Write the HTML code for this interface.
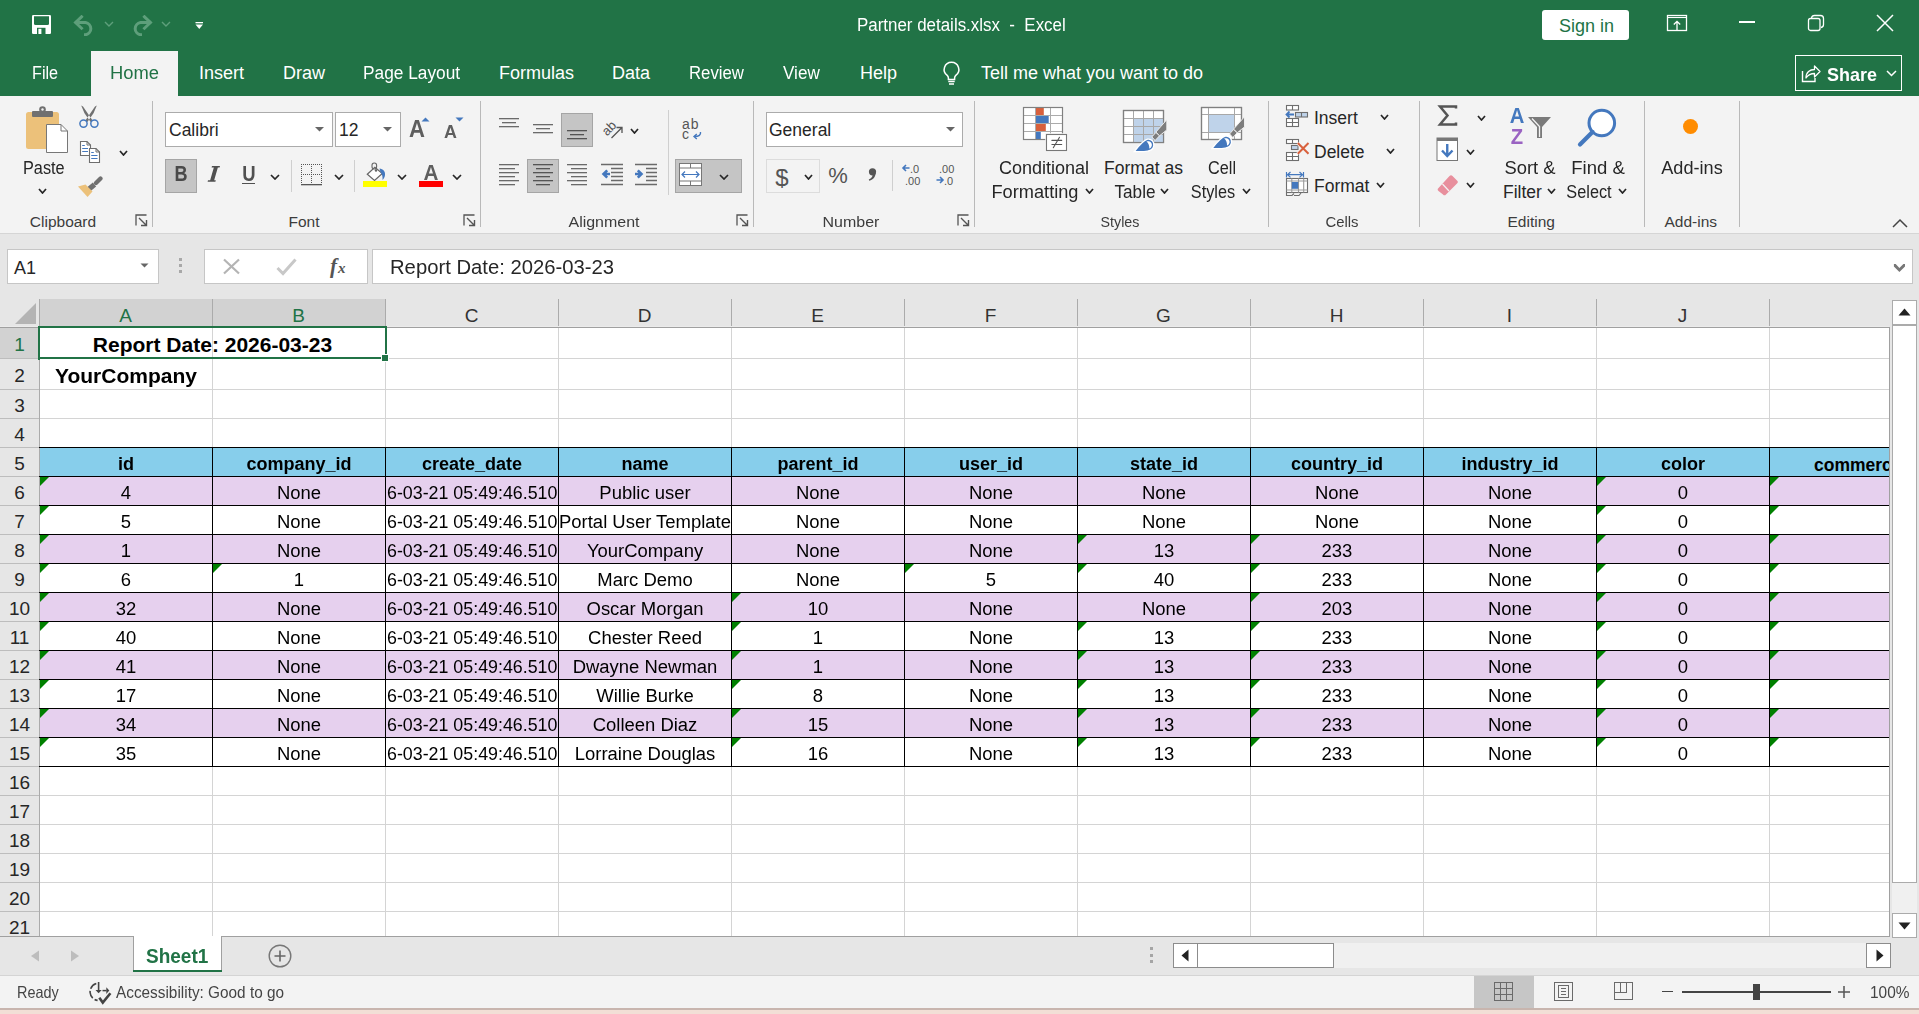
<!DOCTYPE html>
<html><head><meta charset="utf-8"><title>Partner details.xlsx - Excel</title>
<style>
html,body{margin:0;padding:0;width:1919px;height:1014px;overflow:hidden;background:#fff;}
body{position:relative;font-family:"Liberation Sans", sans-serif;}
svg text{font-family:"Liberation Sans",sans-serif;}
</style></head><body>
<div style="position:absolute;left:0px;top:0px;width:1919px;height:96px;background:#217346;"></div><svg style="position:absolute;left:32px;top:15px;" width="19" height="19" viewBox="0 0 19 19"><rect x="0" y="0" width="19" height="19" rx="1.2" fill="#fff"/><path d="M2 1.2 H17 V8.5 a1.5 1.5 0 0 1 -1.5 1.5 H3.5 a1.5 1.5 0 0 1 -1.5 -1.5 Z" fill="#217346"/><rect x="5" y="12.8" width="8.5" height="6.2" fill="#217346"/><rect x="6.4" y="13.8" width="3" height="5.2" fill="#fff"/></svg><svg style="position:absolute;left:73px;top:15px;" width="23" height="21" viewBox="0 0 23 21"><path d="M2.5 7.5 L8.5 1.8 M2.5 7.5 L8.5 13.2" stroke="#5e9f7b" stroke-width="3" fill="none" stroke-linecap="square"/><path d="M3.5 7.5 H12.5 A6.8 6.3 0 0 1 12.5 19.8 H11" stroke="#5e9f7b" stroke-width="3" fill="none"/></svg><svg style="position:absolute;left:104px;top:21px;" width="10" height="7" viewBox="0 0 10 7"><path d="M1 1 L5 5 L9 1" stroke="#5e9f7b" stroke-width="1.4" fill="none"/></svg><svg style="position:absolute;left:130px;top:15px;" width="23" height="21" viewBox="0 0 23 21"><path d="M20.5 7.5 L14.5 1.8 M20.5 7.5 L14.5 13.2" stroke="#5e9f7b" stroke-width="3" fill="none" stroke-linecap="square"/><path d="M19.5 7.5 H10.5 A6.8 6.3 0 0 0 10.5 19.8 H12" stroke="#5e9f7b" stroke-width="3" fill="none"/></svg><svg style="position:absolute;left:161px;top:21px;" width="10" height="7" viewBox="0 0 10 7"><path d="M1 1 L5 5 L9 1" stroke="#5e9f7b" stroke-width="1.4" fill="none"/></svg><svg style="position:absolute;left:195px;top:21px;" width="9" height="9" viewBox="0 0 9 9"><rect x="0.5" y="1" width="7.5" height="1.3" fill="#fff"/><path d="M0.5 3.5 H8 L4.25 8 Z" fill="#fff"/></svg><div style="position:absolute;top:16.46px;font-size:18px;line-height:18px;color:#fff;font-weight:normal;white-space:pre;left:857px;transform:scaleX(0.94);transform-origin:left top;">Partner details.xlsx  -  Excel</div><div style="position:absolute;left:1542px;top:10px;width:87px;height:30px;background:#fff;border-radius:3px;"></div><div style="position:absolute;top:16.96px;font-size:18px;line-height:18px;color:#217346;font-weight:normal;white-space:pre;left:1559px;">Sign in</div><svg style="position:absolute;left:1666px;top:14px;" width="22" height="18" viewBox="0 0 22 18"><rect x="1.5" y="1.5" width="19" height="15" stroke="#fff" stroke-width="1.3" fill="none"/><path d="M1.5 3.5 H20.5" stroke="#fff" stroke-width="1.1"/><path d="M11 16.5 V7.5 M7.8 10.5 L11 7.3 L14.2 10.5" stroke="#fff" stroke-width="1.3" fill="none"/></svg><div style="position:absolute;left:1739px;top:21px;width:16px;height:1.5px;background:#fff;"></div><svg style="position:absolute;left:1807px;top:14px;" width="18" height="18" viewBox="0 0 18 18"><rect x="1.5" y="4.5" width="11.5" height="12" rx="2" stroke="#fff" stroke-width="1.3" fill="none"/><path d="M4.5 4 a3 3 0 0 1 3-2.5 H13.5 a3 3 0 0 1 3 3 V10.5 a3 3 0 0 1 -2.5 3" stroke="#fff" stroke-width="1.3" fill="none"/></svg><svg style="position:absolute;left:1876px;top:14px;" width="18" height="18" viewBox="0 0 18 18"><path d="M1 1 L17 17 M17 1 L1 17" stroke="#fff" stroke-width="1.5"/></svg><div style="position:absolute;left:91px;top:51px;width:87px;height:45px;background:#f3f3f3;"></div><div style="position:absolute;top:63.96px;font-size:18px;line-height:18px;color:#fff;font-weight:normal;white-space:pre;left:32px;transform:scaleX(0.9);transform-origin:left top;">File</div><div style="position:absolute;top:63.96px;font-size:18px;line-height:18px;color:#217346;font-weight:normal;white-space:pre;left:110px;transform:scaleX(1.02);transform-origin:left top;">Home</div><div style="position:absolute;top:63.96px;font-size:18px;line-height:18px;color:#fff;font-weight:normal;white-space:pre;left:199px;">Insert</div><div style="position:absolute;top:63.96px;font-size:18px;line-height:18px;color:#fff;font-weight:normal;white-space:pre;left:283px;">Draw</div><div style="position:absolute;top:63.96px;font-size:18px;line-height:18px;color:#fff;font-weight:normal;white-space:pre;left:363px;transform:scaleX(0.96);transform-origin:left top;">Page Layout</div><div style="position:absolute;top:63.96px;font-size:18px;line-height:18px;color:#fff;font-weight:normal;white-space:pre;left:499px;">Formulas</div><div style="position:absolute;top:63.96px;font-size:18px;line-height:18px;color:#fff;font-weight:normal;white-space:pre;left:612px;">Data</div><div style="position:absolute;top:63.96px;font-size:18px;line-height:18px;color:#fff;font-weight:normal;white-space:pre;left:689px;transform:scaleX(0.93);transform-origin:left top;">Review</div><div style="position:absolute;top:63.96px;font-size:18px;line-height:18px;color:#fff;font-weight:normal;white-space:pre;left:783px;transform:scaleX(0.95);transform-origin:left top;">View</div><div style="position:absolute;top:63.96px;font-size:18px;line-height:18px;color:#fff;font-weight:normal;white-space:pre;left:860px;">Help</div><svg style="position:absolute;left:942px;top:61px;" width="19" height="24" viewBox="0 0 19 24"><path d="M9.5 1.2 a7.3 7.3 0 0 1 4.3 13.2 c-0.8 0.7 -1.2 1.5 -1.2 2.6 v1.5 h-6.2 v-1.5 c0-1.1 -0.4-1.9 -1.2-2.6 A7.3 7.3 0 0 1 9.5 1.2z" stroke="#fff" stroke-width="1.5" fill="none"/><path d="M6.3 20.5 H12.7 M7 23 H12" stroke="#fff" stroke-width="1.5"/></svg><div style="position:absolute;top:63.96px;font-size:18px;line-height:18px;color:#fff;font-weight:normal;white-space:pre;left:981px;">Tell me what you want to do</div><div style="position:absolute;left:1795px;top:55px;width:107px;height:36px;border:1px solid #fff;box-sizing:border-box;"></div><svg style="position:absolute;left:1801px;top:63px;" width="20" height="20" viewBox="0 0 20 20"><path d="M1.5 8 V18.5 H14 V15" stroke="#fff" stroke-width="1.4" fill="none"/><path d="M5 15 C5 9 9 6.5 13.5 6.5 V3 L19 8.5 L13.5 14 V10.5 C10 10.5 7 12 5 15z" stroke="#fff" stroke-width="1.3" fill="none" stroke-linejoin="round"/></svg><div style="position:absolute;top:65.84px;font-size:18.5px;line-height:18.5px;color:#fff;font-weight:bold;white-space:pre;left:1826.6px;transform:scaleX(0.97);transform-origin:left top;">Share</div><svg style="position:absolute;left:1886px;top:70px;" width="11" height="7" viewBox="0 0 11 7"><path d="M1 1 L5.5 5.5 L10 1" stroke="#fff" stroke-width="1.5" fill="none"/></svg><div style="position:absolute;left:0px;top:96px;width:1919px;height:137px;background:#f3f3f3;"></div><div style="position:absolute;left:0px;top:233px;width:1919px;height:1px;background:#d5d5d5;"></div><div style="position:absolute;left:152px;top:101px;width:1px;height:126px;background:#b9b9b9;"></div><div style="position:absolute;left:480px;top:101px;width:1px;height:126px;background:#b9b9b9;"></div><div style="position:absolute;left:753px;top:101px;width:1px;height:126px;background:#b9b9b9;"></div><div style="position:absolute;left:974px;top:101px;width:1px;height:126px;background:#b9b9b9;"></div><div style="position:absolute;left:1268px;top:101px;width:1px;height:126px;background:#b9b9b9;"></div><div style="position:absolute;left:1419px;top:101px;width:1px;height:126px;background:#b9b9b9;"></div><div style="position:absolute;left:1644px;top:101px;width:1px;height:126px;background:#b9b9b9;"></div><div style="position:absolute;left:1739px;top:101px;width:1px;height:126px;background:#b9b9b9;"></div><div style="position:absolute;top:213.68px;font-size:15.5px;line-height:15.5px;color:#3c3c3c;font-weight:normal;white-space:pre;left:-237px;width:600px;text-align:center;">Clipboard</div><div style="position:absolute;top:213.68px;font-size:15.5px;line-height:15.5px;color:#3c3c3c;font-weight:normal;white-space:pre;left:4px;width:600px;text-align:center;">Font</div><div style="position:absolute;top:213.68px;font-size:15.5px;line-height:15.5px;color:#3c3c3c;font-weight:normal;white-space:pre;left:304.29999999999995px;width:600px;text-align:center;transform:scaleX(1.03);transform-origin:center top;">Alignment</div><div style="position:absolute;top:213.68px;font-size:15.5px;line-height:15.5px;color:#3c3c3c;font-weight:normal;white-space:pre;left:550.8px;width:600px;text-align:center;transform:scaleX(1.03);transform-origin:center top;">Number</div><div style="position:absolute;top:213.68px;font-size:15.5px;line-height:15.5px;color:#3c3c3c;font-weight:normal;white-space:pre;left:819.8px;width:600px;text-align:center;transform:scaleX(0.92);transform-origin:center top;">Styles</div><div style="position:absolute;top:213.68px;font-size:15.5px;line-height:15.5px;color:#3c3c3c;font-weight:normal;white-space:pre;left:1042.4px;width:600px;text-align:center;transform:scaleX(0.96);transform-origin:center top;">Cells</div><div style="position:absolute;top:213.68px;font-size:15.5px;line-height:15.5px;color:#3c3c3c;font-weight:normal;white-space:pre;left:1231.2px;width:600px;text-align:center;">Editing</div><div style="position:absolute;top:213.68px;font-size:15.5px;line-height:15.5px;color:#3c3c3c;font-weight:normal;white-space:pre;left:1390.8px;width:600px;text-align:center;">Add-ins</div><svg style="position:absolute;left:135px;top:214px;" width="13" height="13" viewBox="0 0 13 13"><path d="M1 11.5 V1 H11.5" stroke="#555" stroke-width="1.3" fill="none"/><path d="M4 4 L11.5 11.5 M6 11.5 H11.5 V6" stroke="#555" stroke-width="1.4" fill="none"/></svg><svg style="position:absolute;left:463px;top:214px;" width="13" height="13" viewBox="0 0 13 13"><path d="M1 11.5 V1 H11.5" stroke="#555" stroke-width="1.3" fill="none"/><path d="M4 4 L11.5 11.5 M6 11.5 H11.5 V6" stroke="#555" stroke-width="1.4" fill="none"/></svg><svg style="position:absolute;left:736px;top:214px;" width="13" height="13" viewBox="0 0 13 13"><path d="M1 11.5 V1 H11.5" stroke="#555" stroke-width="1.3" fill="none"/><path d="M4 4 L11.5 11.5 M6 11.5 H11.5 V6" stroke="#555" stroke-width="1.4" fill="none"/></svg><svg style="position:absolute;left:957px;top:214px;" width="13" height="13" viewBox="0 0 13 13"><path d="M1 11.5 V1 H11.5" stroke="#555" stroke-width="1.3" fill="none"/><path d="M4 4 L11.5 11.5 M6 11.5 H11.5 V6" stroke="#555" stroke-width="1.4" fill="none"/></svg><svg style="position:absolute;left:1892px;top:218px;" width="16" height="10" viewBox="0 0 16 10"><path d="M1 9 L8 2 L15 9" stroke="#444" stroke-width="1.5" fill="none"/></svg><svg style="position:absolute;left:24px;top:105px;" width="46" height="50" viewBox="0 0 46 50"><rect x="2" y="7" width="33" height="37" rx="2.5" fill="#ecc17a"/><rect x="8" y="6" width="21" height="6" rx="1" fill="#707070"/><circle cx="18.5" cy="4.5" r="3.3" fill="#707070"/><circle cx="18.5" cy="4.5" r="1.2" fill="#f3f3f3"/><path d="M22.5 19.5 H37 L43.5 26 V47.5 H22.5 Z" fill="#fff" stroke="#777" stroke-width="1"/><path d="M37 19.5 V26 H43.5" fill="none" stroke="#777" stroke-width="1"/></svg><div style="position:absolute;top:160.19px;font-size:17.5px;line-height:17.5px;color:#262626;font-weight:normal;white-space:pre;left:23px;transform:scaleX(0.93);transform-origin:left top;">Paste</div><svg style="position:absolute;left:38px;top:188px;" width="9" height="6" viewBox="0 0 9 6"><path d="M1 1 L4.5 5 L8 1" stroke="#262626" stroke-width="1.7" fill="none"/></svg><svg style="position:absolute;left:78px;top:105px;" width="22" height="24" viewBox="0 0 22 24"><path d="M3.2 0.6 L5 1.6 L14.6 15.6 L12.6 17 L6.5 8.2 Z M18.8 0.6 L17 1.6 L7.4 15.6 L9.4 17 L15.5 8.2 Z" fill="#707070"/><circle cx="5.5" cy="18.6" r="3.6" stroke="#4478be" stroke-width="1.5" fill="#f3f3f3"/><circle cx="16.4" cy="18.6" r="3.6" stroke="#4478be" stroke-width="1.5" fill="#f3f3f3"/></svg><svg style="position:absolute;left:79px;top:140px;" width="22" height="24" viewBox="0 0 22 24"><path d="M1.5 1.5 H8 L11.5 5 V15.5 H1.5 Z" fill="#fff" stroke="#6e6e6e" stroke-width="1.1"/><path d="M8 1.5 V5 H11.5" fill="none" stroke="#6e6e6e" stroke-width="1"/><path d="M3.2 5.5 H5.8 M3.2 8.5 H9 M3.2 11.5 H9" stroke="#4478be" stroke-width="1.1"/><path d="M10.5 8.5 H17 L20.5 12 V22.5 H10.5 Z" fill="#fff" stroke="#6e6e6e" stroke-width="1.1"/><path d="M17 8.5 V12 H20.5" fill="none" stroke="#6e6e6e" stroke-width="1"/><path d="M12.2 12.5 H14.8 M12.2 15.5 H18.5 M12.2 18.5 H18.5" stroke="#4478be" stroke-width="1.1"/></svg><svg style="position:absolute;left:119px;top:150px;" width="9" height="6" viewBox="0 0 9 6"><path d="M1 1 L4.5 5 L8 1" stroke="#262626" stroke-width="1.7" fill="none"/></svg><svg style="position:absolute;left:77px;top:176px;" width="26" height="22" viewBox="0 0 26 22"><path d="M23.5 2.5 L19 7" stroke="#707070" stroke-width="4.2" stroke-linecap="round"/><path d="M17.5 8.5 L11.5 13.5" stroke="#707070" stroke-width="5.2"/><path d="M1 10.5 L8.5 8.5 L15.5 15.5 L10.5 21 Z" fill="#ecc17a"/></svg><div style="position:absolute;left:165px;top:112px;width:168px;height:35px;background:#fff;border:1px solid #ababab;box-sizing:border-box;"></div><div style="position:absolute;top:122.19px;font-size:17.5px;line-height:17.5px;color:#262626;font-weight:normal;white-space:pre;left:169px;">Calibri</div><svg style="position:absolute;left:314px;top:126px;" width="11" height="7" viewBox="0 0 11 7"><path d="M1 1 H10 L5.5 5.5Z" fill="#666"/></svg><div style="position:absolute;left:335px;top:112px;width:66px;height:35px;background:#fff;border:1px solid #ababab;box-sizing:border-box;"></div><div style="position:absolute;top:122.19px;font-size:17.5px;line-height:17.5px;color:#262626;font-weight:normal;white-space:pre;left:339px;">12</div><svg style="position:absolute;left:382px;top:126px;" width="11" height="7" viewBox="0 0 11 7"><path d="M1 1 H10 L5.5 5.5Z" fill="#666"/></svg><div style="position:absolute;top:117.91px;font-size:23.5px;line-height:23.5px;color:#5e5e5e;font-weight:bold;white-space:pre;left:408.5px;transform:scaleX(0.94);transform-origin:left top;">A</div><svg style="position:absolute;left:421px;top:117px;" width="9" height="5" viewBox="0 0 9 5"><path d="M0.5 4.5 L4.5 0.5 L8.5 4.5Z" fill="#4478be"/></svg><div style="position:absolute;top:121.72px;font-size:19px;line-height:19px;color:#5e5e5e;font-weight:bold;white-space:pre;left:443.5px;transform:scaleX(0.94);transform-origin:left top;">A</div><svg style="position:absolute;left:455px;top:117px;" width="9" height="5" viewBox="0 0 9 5"><path d="M0.5 0.5 L4.5 4.5 L8.5 0.5Z" fill="#4478be"/></svg><div style="position:absolute;left:165px;top:159px;width:32px;height:34px;background:#c5c5c5;border:1px solid #a5a5a5;box-sizing:border-box;"></div><div style="position:absolute;top:163.38px;font-size:22px;line-height:22px;color:#4a4a4a;font-weight:bold;white-space:pre;left:-119px;width:600px;text-align:center;transform:scaleX(0.82);transform-origin:center top;">B</div><svg style="position:absolute;left:206px;top:164px;" width="16" height="20" viewBox="0 0 16 20"><path d="M8.2 2.2 H12.2 L7.8 17.6 H3.8 Z M6 2 H14 L13.6 3.5 H5.6 Z M2 16.3 H9.8 L9.4 17.7 H1.6 Z" fill="#505050"/></svg><div style="position:absolute;top:163.38px;font-size:22px;line-height:22px;color:#505050;font-weight:bold;white-space:pre;left:-51.5px;width:600px;text-align:center;transform:scaleX(0.84);transform-origin:center top;">U</div><div style="position:absolute;left:242px;top:183px;width:13px;height:1.3px;background:#505050;"></div><svg style="position:absolute;left:270px;top:174px;" width="10" height="6" viewBox="0 0 10 6"><path d="M1 1 L5.0 5 L9 1" stroke="#262626" stroke-width="1.7" fill="none"/></svg><div style="position:absolute;left:291px;top:160px;width:1px;height:32px;background:#cfcfcf;"></div><svg style="position:absolute;left:301px;top:164px;" width="22" height="22" viewBox="0 0 22 22"><g fill="#555"><rect x="0" y="0" width="1" height="1"/><rect x="0" y="10" width="1" height="1"/><rect x="0" y="12" width="1" height="1"/><rect x="0" y="14" width="1" height="1"/><rect x="0" y="16" width="1" height="1"/><rect x="0" y="18" width="1" height="1"/><rect x="0" y="2" width="1" height="1"/><rect x="0" y="20" width="1" height="1"/><rect x="0" y="4" width="1" height="1"/><rect x="0" y="6" width="1" height="1"/><rect x="0" y="8" width="1" height="1"/><rect x="10" y="0" width="1" height="1"/><rect x="10" y="10" width="1" height="1"/><rect x="10" y="12" width="1" height="1"/><rect x="10" y="14" width="1" height="1"/><rect x="10" y="16" width="1" height="1"/><rect x="10" y="18" width="1" height="1"/><rect x="10" y="2" width="1" height="1"/><rect x="10" y="20" width="1" height="1"/><rect x="10" y="4" width="1" height="1"/><rect x="10" y="6" width="1" height="1"/><rect x="10" y="8" width="1" height="1"/><rect x="12" y="0" width="1" height="1"/><rect x="12" y="10" width="1" height="1"/><rect x="14" y="0" width="1" height="1"/><rect x="14" y="10" width="1" height="1"/><rect x="16" y="0" width="1" height="1"/><rect x="16" y="10" width="1" height="1"/><rect x="18" y="0" width="1" height="1"/><rect x="18" y="10" width="1" height="1"/><rect x="2" y="0" width="1" height="1"/><rect x="2" y="10" width="1" height="1"/><rect x="20" y="0" width="1" height="1"/><rect x="20" y="10" width="1" height="1"/><rect x="20" y="12" width="1" height="1"/><rect x="20" y="14" width="1" height="1"/><rect x="20" y="16" width="1" height="1"/><rect x="20" y="18" width="1" height="1"/><rect x="20" y="2" width="1" height="1"/><rect x="20" y="20" width="1" height="1"/><rect x="20" y="4" width="1" height="1"/><rect x="20" y="6" width="1" height="1"/><rect x="20" y="8" width="1" height="1"/><rect x="4" y="0" width="1" height="1"/><rect x="4" y="10" width="1" height="1"/><rect x="6" y="0" width="1" height="1"/><rect x="6" y="10" width="1" height="1"/><rect x="8" y="0" width="1" height="1"/><rect x="8" y="10" width="1" height="1"/></g><rect x="0" y="20" width="21" height="1.3" fill="#555"/></svg><svg style="position:absolute;left:334px;top:174px;" width="10" height="6" viewBox="0 0 10 6"><path d="M1 1 L5.0 5 L9 1" stroke="#262626" stroke-width="1.7" fill="none"/></svg><div style="position:absolute;left:354px;top:160px;width:1px;height:32px;background:#cfcfcf;"></div><svg style="position:absolute;left:362px;top:162px;" width="27" height="26" viewBox="0 0 27 26"><path d="M5.3 12.3 L12.9 5.2 L20.3 11.5 L12.5 18.5 Z" fill="#fff" stroke="#666" stroke-width="1.2"/><rect x="10" y="1" width="4.6" height="6" rx="2.2" fill="none" stroke="#666" stroke-width="1.1"/><path d="M14 6 V8" stroke="#666" stroke-width="1.1"/><circle cx="14" cy="8.6" r="1.2" fill="#666"/><path d="M17.5 6.5 C21 6.8 23.5 9.5 23 13 C22.8 15 21.8 16.8 20.5 18 C20.8 15.5 20.5 12.5 18.5 10 Z" fill="#4478be"/><rect x="1" y="19" width="24" height="6" fill="#ffff00"/></svg><svg style="position:absolute;left:397px;top:174px;" width="10" height="6" viewBox="0 0 10 6"><path d="M1 1 L5.0 5 L9 1" stroke="#262626" stroke-width="1.7" fill="none"/></svg><div style="position:absolute;top:162.38px;font-size:22px;line-height:22px;color:#5e5e5e;font-weight:bold;white-space:pre;left:130.5px;width:600px;text-align:center;transform:scaleX(0.94);transform-origin:center top;">A</div><div style="position:absolute;left:419px;top:181px;width:24px;height:6px;background:#f00;"></div><svg style="position:absolute;left:452px;top:174px;" width="10" height="6" viewBox="0 0 10 6"><path d="M1 1 L5.0 5 L9 1" stroke="#262626" stroke-width="1.7" fill="none"/></svg><svg style="position:absolute;left:499px;top:117px;" width="30" height="30" viewBox="0 0 30 30"><rect x="0" y="1" width="20" height="1.3" fill="#6a6a6a"/><rect x="3" y="5" width="14" height="1.3" fill="#6a6a6a"/><rect x="0" y="9" width="20" height="1.3" fill="#6a6a6a"/></svg><svg style="position:absolute;left:533px;top:123px;" width="30" height="30" viewBox="0 0 30 30"><rect x="0" y="1" width="20" height="1.3" fill="#6a6a6a"/><rect x="3" y="5" width="14" height="1.3" fill="#6a6a6a"/><rect x="0" y="9" width="20" height="1.3" fill="#6a6a6a"/></svg><div style="position:absolute;left:561px;top:113px;width:32px;height:34px;background:#c5c5c5;border:1px solid #a5a5a5;box-sizing:border-box;"></div><svg style="position:absolute;left:567px;top:129px;" width="30" height="30" viewBox="0 0 30 30"><rect x="0" y="1" width="20" height="1.3" fill="#555"/><rect x="3" y="5" width="14" height="1.3" fill="#555"/><rect x="0" y="9" width="20" height="1.3" fill="#555"/></svg><svg style="position:absolute;left:600px;top:117px;" width="26" height="24" viewBox="0 0 26 24"><g transform="rotate(-45 9 11)"><text x="1.5" y="15.5" font-size="13" fill="#555" font-family="Liberation Sans">ab</text></g><path d="M11.5 21 L21.5 11 M16.5 10.5 H22 V16" stroke="#555" stroke-width="1.3" fill="none"/></svg><svg style="position:absolute;left:630px;top:128px;" width="9" height="6" viewBox="0 0 9 6"><path d="M1 1 L4.5 5 L8 1" stroke="#262626" stroke-width="1.7" fill="none"/></svg><div style="position:absolute;left:668px;top:110px;width:1px;height:85px;background:#cfcfcf;"></div><svg style="position:absolute;left:681px;top:115px;" width="24" height="26" viewBox="0 0 24 26"><text x="1" y="13.5" font-size="14" fill="#555" font-family="Liberation Sans" textLength="16.5">ab</text><text x="1" y="24" font-size="14" fill="#555" font-family="Liberation Sans">c</text><path d="M19.5 17 C20 20 18 21.5 13.5 21.5 M15.8 19 L13 21.5 L15.8 24" stroke="#4478be" stroke-width="1.4" fill="none"/></svg><svg style="position:absolute;left:499px;top:163px;" width="30" height="30" viewBox="0 0 30 30"><rect x="0" y="1" width="20" height="1.3" fill="#6a6a6a"/><rect x="0" y="5" width="16" height="1.3" fill="#6a6a6a"/><rect x="0" y="9" width="20" height="1.3" fill="#6a6a6a"/><rect x="0" y="13" width="16" height="1.3" fill="#6a6a6a"/><rect x="0" y="17" width="20" height="1.3" fill="#6a6a6a"/><rect x="0" y="21" width="16" height="1.3" fill="#6a6a6a"/></svg><div style="position:absolute;left:527px;top:159px;width:32px;height:34px;background:#c5c5c5;border:1px solid #a5a5a5;box-sizing:border-box;"></div><svg style="position:absolute;left:533px;top:163px;" width="30" height="30" viewBox="0 0 30 30"><rect x="0" y="1" width="20" height="1.3" fill="#555"/><rect x="3" y="5" width="14" height="1.3" fill="#555"/><rect x="0" y="9" width="20" height="1.3" fill="#555"/><rect x="3" y="13" width="14" height="1.3" fill="#555"/><rect x="0" y="17" width="20" height="1.3" fill="#555"/><rect x="3" y="21" width="14" height="1.3" fill="#555"/></svg><svg style="position:absolute;left:567px;top:163px;" width="30" height="30" viewBox="0 0 30 30"><rect x="0" y="1" width="20" height="1.3" fill="#6a6a6a"/><rect x="4" y="5" width="16" height="1.3" fill="#6a6a6a"/><rect x="0" y="9" width="20" height="1.3" fill="#6a6a6a"/><rect x="4" y="13" width="16" height="1.3" fill="#6a6a6a"/><rect x="0" y="17" width="20" height="1.3" fill="#6a6a6a"/><rect x="4" y="21" width="16" height="1.3" fill="#6a6a6a"/></svg><svg style="position:absolute;left:601px;top:163px;" width="24" height="24" viewBox="0 0 24 24"><path d="M0 1.5 H22 M10 5.5 H22 M10 9.5 H22 M10 13.5 H22 M10 17.5 H22 M0 21.5 H22" stroke="#6a6a6a" stroke-width="1.3"/><path d="M9 11 H3 M6.2 7.3 L2.5 11 L6.2 14.7" stroke="#4478be" stroke-width="2.6" fill="none"/></svg><svg style="position:absolute;left:635px;top:163px;" width="24" height="24" viewBox="0 0 24 24"><path d="M0 1.5 H22 M11 5.5 H22 M11 9.5 H22 M11 13.5 H22 M11 17.5 H22 M0 21.5 H22" stroke="#6a6a6a" stroke-width="1.3"/><path d="M0 11 H6 M2.8 7.3 L6.5 11 L2.8 14.7" stroke="#4478be" stroke-width="2.6" fill="none"/></svg><div style="position:absolute;left:675px;top:159px;width:67px;height:34px;background:#c5c5c5;border:1px solid #a5a5a5;box-sizing:border-box;"></div><svg style="position:absolute;left:679px;top:163px;" width="23" height="23" viewBox="0 0 23 23"><rect x="0.5" y="0.5" width="22" height="22" fill="#fff" stroke="#777"/><path d="M0.5 5 H22.5 M0.5 18 H22.5 M11.5 0.5 V5 M11.5 18 V22.5" stroke="#777"/><path d="M3 11.5 H20 M6 8.5 L3 11.5 L6 14.5 M17 8.5 L20 11.5 L17 14.5" stroke="#4478be" stroke-width="1.2" fill="none"/></svg><svg style="position:absolute;left:719px;top:174px;" width="10" height="6" viewBox="0 0 10 6"><path d="M1 1 L5.0 5 L9 1" stroke="#262626" stroke-width="1.7" fill="none"/></svg><div style="position:absolute;left:766px;top:112px;width:197px;height:35px;background:#fff;border:1px solid #ababab;box-sizing:border-box;"></div><div style="position:absolute;top:122.19px;font-size:17.5px;line-height:17.5px;color:#262626;font-weight:normal;white-space:pre;left:769px;">General</div><svg style="position:absolute;left:945px;top:126px;" width="11" height="7" viewBox="0 0 11 7"><path d="M1 1 H10 L5.5 5.5Z" fill="#666"/></svg><div style="position:absolute;left:766px;top:159px;width:54px;height:34px;border:1px solid #dcdcdc;box-sizing:border-box;"></div><div style="position:absolute;top:165.68px;font-size:24px;line-height:24px;color:#555;font-weight:normal;white-space:pre;left:482px;width:600px;text-align:center;">$</div><svg style="position:absolute;left:804px;top:174px;" width="9" height="6" viewBox="0 0 9 6"><path d="M1 1 L4.5 5 L8 1" stroke="#262626" stroke-width="1.7" fill="none"/></svg><div style="position:absolute;top:165.38px;font-size:22px;line-height:22px;color:#555;font-weight:normal;white-space:pre;left:538px;width:600px;text-align:center;">%</div><svg style="position:absolute;left:866px;top:167px;" width="12" height="15" viewBox="0 0 12 15"><circle cx="6.5" cy="4.8" r="3.6" fill="#555"/><path d="M9.6 5.5 C9.8 9.5 7.5 12.5 3.2 13.8 L2.8 12.6 C5.5 11.2 6.8 9.5 6.6 7.8 Z" fill="#555"/></svg><div style="position:absolute;left:892px;top:160px;width:1px;height:31px;background:#cfcfcf;"></div><svg style="position:absolute;left:901px;top:162px;" width="24" height="25" viewBox="0 0 24 25"><path d="M8.5 6 H2 M5 3 L2 6 L5 9" stroke="#4478be" stroke-width="1.6" fill="none"/><text x="9" y="11" font-size="11" fill="#555" font-family="Liberation Sans">.0</text><text x="4" y="23" font-size="11" fill="#555" font-family="Liberation Sans">.00</text></svg><svg style="position:absolute;left:935px;top:162px;" width="24" height="25" viewBox="0 0 24 25"><text x="4" y="11" font-size="11" fill="#555" font-family="Liberation Sans">.00</text><path d="M1.5 18 H8 M5 15 L8 18 L5 21" stroke="#4478be" stroke-width="1.6" fill="none"/><text x="9" y="23" font-size="11" fill="#555" font-family="Liberation Sans">.0</text></svg><svg style="position:absolute;left:1022px;top:106px;" width="47" height="46" viewBox="0 0 47 46"><rect x="1.5" y="1.5" width="39" height="32" fill="#fff"/><path d="M13.5 1.5 V33.5 M28.5 1.5 V33.5 M1.5 9.5 H40.5 M1.5 17.5 H40.5 M1.5 25.5 H40.5" stroke="#ababab" stroke-width="1"/><rect x="14" y="2" width="7.8" height="7" fill="#d8603c"/><rect x="14" y="10" width="12.7" height="7" fill="#4478be"/><rect x="14" y="18" width="9.8" height="7" fill="#d8603c"/><rect x="14" y="26" width="4.8" height="7" fill="#4478be"/><rect x="1.5" y="1.5" width="39" height="32" fill="none" stroke="#808080" stroke-width="1.2"/><rect x="24.5" y="28.5" width="20" height="16" fill="#fff" stroke="#f3f3f3" stroke-width="2.5"/><rect x="24.5" y="28.5" width="20" height="16" fill="#fff" stroke="#777" stroke-width="1.1"/><path d="M29.9 34.4 H39.7 M29.9 38.5 H39.7 M31.3 41.7 L37.5 31.3" stroke="#555" stroke-width="1.1" stroke-linecap="round"/></svg><div style="position:absolute;top:159.99px;font-size:17.5px;line-height:17.5px;color:#262626;font-weight:normal;white-space:pre;left:743.5px;width:600px;text-align:center;transform:scaleX(1.03);transform-origin:center top;">Conditional</div><div style="position:absolute;top:183.89px;font-size:17.5px;line-height:17.5px;color:#262626;font-weight:normal;white-space:pre;left:735px;width:600px;text-align:center;transform:scaleX(1.04);transform-origin:center top;">Formatting</div><svg style="position:absolute;left:1085px;top:188px;" width="9" height="6" viewBox="0 0 9 6"><path d="M1 1 L4.5 5 L8 1" stroke="#262626" stroke-width="1.7" fill="none"/></svg><svg style="position:absolute;left:1122px;top:106px;" width="47" height="47" viewBox="0 0 47 47"><rect x="1.5" y="4.5" width="40" height="32" fill="#fff" stroke="#808080" stroke-width="1.2"/><rect x="11.5" y="12.5" width="30" height="24" fill="#bfd3ea"/><path d="M11.5 4.5 V36.5 M21.5 4.5 V36.5 M31.5 4.5 V36.5 M1.5 12.5 H41.5 M1.5 20.5 H41.5 M1.5 28.5 H41.5" stroke="#a8a8a8" stroke-width="1"/><rect x="1.5" y="4.5" width="40" height="32" fill="none" stroke="#808080" stroke-width="1.2"/><g transform="translate(0 0)"><path d="M33.9 26.1 L44.8 13.7 L44.8 23.9 L37.5 29.8 Z" fill="#7d7d7d" stroke="#f3f3f3" stroke-width="0.9"/><path d="M29.9 30.9 L33.9 26.5 L37.5 29.8 L33.1 34.5 Z" fill="#7d7d7d" stroke="#f3f3f3" stroke-width="0.9"/><path d="M12.3 45.5 C17 39.5 21 34.5 25.5 33.2 C29.5 32.5 32.5 36 31.8 39.8 C31 44 26.5 45.5 22 45.6 Z" fill="#4478be" stroke="#fff" stroke-width="1.3"/><path d="M24.5 35.5 C27.5 34.5 30.5 36.8 29.8 39.8 C29.3 41.5 28.3 42.3 27.3 42.6 C27.6 39.5 26.3 37 24.5 35.5 Z" fill="#fff"/></g></svg><div style="position:absolute;top:159.99px;font-size:17.5px;line-height:17.5px;color:#262626;font-weight:normal;white-space:pre;left:843.5px;width:600px;text-align:center;">Format as</div><div style="position:absolute;top:183.89px;font-size:17.5px;line-height:17.5px;color:#262626;font-weight:normal;white-space:pre;left:835px;width:600px;text-align:center;transform:scaleX(0.98);transform-origin:center top;">Table</div><svg style="position:absolute;left:1160px;top:188px;" width="9" height="6" viewBox="0 0 9 6"><path d="M1 1 L4.5 5 L8 1" stroke="#262626" stroke-width="1.7" fill="none"/></svg><svg style="position:absolute;left:1200px;top:103px;" width="47" height="47" viewBox="0 0 47 47"><rect x="1.5" y="4.5" width="40" height="32" fill="#fff" stroke="#808080" stroke-width="1.2"/><rect x="8.5" y="11.5" width="26" height="18" fill="#bfd3ea"/><path d="M8.5 4.5 V36.5 M34.5 4.5 V36.5 M1.5 11.5 H41.5 M1.5 29.5 H41.5" stroke="#a8a8a8" stroke-width="1"/><rect x="1.5" y="4.5" width="40" height="32" fill="none" stroke="#808080" stroke-width="1.2"/><g transform="translate(-0.3 0)"><path d="M33.9 26.1 L44.8 13.7 L44.8 23.9 L37.5 29.8 Z" fill="#7d7d7d" stroke="#f3f3f3" stroke-width="0.9"/><path d="M29.9 30.9 L33.9 26.5 L37.5 29.8 L33.1 34.5 Z" fill="#7d7d7d" stroke="#f3f3f3" stroke-width="0.9"/><path d="M12.3 45.5 C17 39.5 21 34.5 25.5 33.2 C29.5 32.5 32.5 36 31.8 39.8 C31 44 26.5 45.5 22 45.6 Z" fill="#4478be" stroke="#fff" stroke-width="1.3"/><path d="M24.5 35.5 C27.5 34.5 30.5 36.8 29.8 39.8 C29.3 41.5 28.3 42.3 27.3 42.6 C27.6 39.5 26.3 37 24.5 35.5 Z" fill="#fff"/></g></svg><div style="position:absolute;top:159.99px;font-size:17.5px;line-height:17.5px;color:#262626;font-weight:normal;white-space:pre;left:922px;width:600px;text-align:center;transform:scaleX(0.93);transform-origin:center top;">Cell</div><div style="position:absolute;top:183.89px;font-size:17.5px;line-height:17.5px;color:#262626;font-weight:normal;white-space:pre;left:913.2px;width:600px;text-align:center;transform:scaleX(0.93);transform-origin:center top;">Styles</div><svg style="position:absolute;left:1242px;top:188px;" width="9" height="6" viewBox="0 0 9 6"><path d="M1 1 L4.5 5 L8 1" stroke="#262626" stroke-width="1.7" fill="none"/></svg><svg style="position:absolute;left:1280px;top:100px;" width="32" height="100" viewBox="0 0 32 100"><g fill="#fff" stroke="#6e6e6e" stroke-width="1.1"><rect x="6.5" y="5.5" width="12" height="4.5"/><path d="M12.5 5.5 V10"/><rect x="15.5" y="12.5" width="12" height="4.5" fill="#bfd3ea"/><path d="M21.5 12.5 V17"/><rect x="6.5" y="18.5" width="12" height="8"/><path d="M12.5 18.5 V26.5 M6.5 22.5 H18.5"/><rect x="6.5" y="39.5" width="12" height="4"/><path d="M12.5 39.5 V43.5"/><rect x="11.5" y="45.5" width="6.5" height="4" fill="#bfd3ea"/><rect x="6.5" y="52.5" width="12" height="8"/><path d="M12.5 52.5 V60.5 M6.5 56.5 H18.5"/><rect x="6.5" y="78.5" width="21" height="14"/><path d="M6.5 81 H27.5 M6.5 90 H27.5 M11.8 78.5 V92.5 M18.5 78.5 V92.5 M23.7 78.5 V92.5" stroke="#9a9a9a"/><path d="M6.5 92.5 V95.5 H12 L14 93.5 M14 95.5 H19 L21 93" fill="none"/></g><rect x="11.8" y="82" width="6.4" height="6.8" fill="#4478be"/><path d="M14 14.5 H6.5 M9.5 11.5 L6.5 14.5 L9.5 17.5" stroke="#4478be" stroke-width="1.8" fill="none"/><path d="M6.5 72 V77.5 M23.5 72 V77.5 M7.5 74.7 H22.5 M10.5 72 L7.5 74.7 L10.5 77.4 M19.5 72 L22.5 74.7 L19.5 77.4" stroke="#4478be" stroke-width="1.2" fill="none"/><path d="M17.8 43 L28.5 53.7 M28.5 43 L17.8 53.7" stroke="#f3f3f3" stroke-width="3.6"/><path d="M17.8 43 L28.5 53.7 M28.5 43 L17.8 53.7" stroke="#d8603c" stroke-width="2"/></svg><div style="position:absolute;top:110.39px;font-size:17.5px;line-height:17.5px;color:#262626;font-weight:normal;white-space:pre;left:1314px;">Insert</div><svg style="position:absolute;left:1380px;top:114px;" width="9" height="6" viewBox="0 0 9 6"><path d="M1 1 L4.5 5 L8 1" stroke="#262626" stroke-width="1.7" fill="none"/></svg><div style="position:absolute;top:144.19px;font-size:17.5px;line-height:17.5px;color:#262626;font-weight:normal;white-space:pre;left:1314px;">Delete</div><svg style="position:absolute;left:1386px;top:148px;" width="9" height="6" viewBox="0 0 9 6"><path d="M1 1 L4.5 5 L8 1" stroke="#262626" stroke-width="1.7" fill="none"/></svg><div style="position:absolute;top:178.19px;font-size:17.5px;line-height:17.5px;color:#262626;font-weight:normal;white-space:pre;left:1314px;">Format</div><svg style="position:absolute;left:1376px;top:182px;" width="9" height="6" viewBox="0 0 9 6"><path d="M1 1 L4.5 5 L8 1" stroke="#262626" stroke-width="1.7" fill="none"/></svg><svg style="position:absolute;left:1437px;top:104px;" width="22" height="23" viewBox="0 0 22 23"><path d="M19 4.5 V2.5 H3 L10.5 11.5 L3 20.5 H19 V18.5" stroke="#555" stroke-width="2.5" fill="none" stroke-linejoin="miter"/></svg><svg style="position:absolute;left:1477px;top:115px;" width="9" height="6" viewBox="0 0 9 6"><path d="M1 1 L4.5 5 L8 1" stroke="#262626" stroke-width="1.7" fill="none"/></svg><svg style="position:absolute;left:1436px;top:137px;" width="23" height="25" viewBox="0 0 23 25"><rect x="1" y="1" width="20.5" height="22.5" fill="#fff" stroke="#777"/><rect x="1" y="1" width="20.5" height="3" fill="#777"/><path d="M11.25 7 V19 M6 13.5 L11.25 19 L16.5 13.5" stroke="#4478be" stroke-width="2.4" fill="none"/></svg><svg style="position:absolute;left:1466px;top:149px;" width="9" height="6" viewBox="0 0 9 6"><path d="M1 1 L4.5 5 L8 1" stroke="#262626" stroke-width="1.7" fill="none"/></svg><svg style="position:absolute;left:1436px;top:173px;" width="24" height="23" viewBox="0 0 24 23"><path d="M2.5 15 L13.5 3 a2 2 0 0 1 3 0 L21 7.5 a2 2 0 0 1 0 3 L10 21.5 a2 2 0 0 1 -3 0 L2.5 18 a2 2 0 0 1 0-3z" fill="#e88f9d"/><path d="M6.5 11 L13 18" stroke="#f3f3f3" stroke-width="1.2"/></svg><svg style="position:absolute;left:1466px;top:182px;" width="9" height="6" viewBox="0 0 9 6"><path d="M1 1 L4.5 5 L8 1" stroke="#262626" stroke-width="1.7" fill="none"/></svg><div style="position:absolute;top:104.98px;font-size:22px;line-height:22px;color:#4478be;font-weight:bold;white-space:pre;left:1217px;width:600px;text-align:center;transform:scaleX(0.92);transform-origin:center top;">A</div><div style="position:absolute;top:126.38px;font-size:22px;line-height:22px;color:#9a63c2;font-weight:bold;white-space:pre;left:1216.5px;width:600px;text-align:center;transform:scaleX(0.92);transform-origin:center top;">Z</div><svg style="position:absolute;left:1527px;top:116px;" width="25" height="23" viewBox="0 0 25 23"><path d="M1 1 H24 L15 11 V22 H10 V11 Z" fill="#7a7a7a"/><path d="M5 2.5 L12.5 10.5 V21" stroke="#f3f3f3" stroke-width="1.3" fill="none"/></svg><div style="position:absolute;top:160.19px;font-size:17.5px;line-height:17.5px;color:#262626;font-weight:normal;white-space:pre;left:1230px;width:600px;text-align:center;transform:scaleX(1.05);transform-origin:center top;">Sort &amp;</div><div style="position:absolute;top:183.89px;font-size:17.5px;line-height:17.5px;color:#262626;font-weight:normal;white-space:pre;left:1222.5px;width:600px;text-align:center;">Filter</div><svg style="position:absolute;left:1547px;top:188px;" width="9" height="6" viewBox="0 0 9 6"><path d="M1 1 L4.5 5 L8 1" stroke="#262626" stroke-width="1.7" fill="none"/></svg><svg style="position:absolute;left:1576px;top:107px;" width="42" height="42" viewBox="0 0 42 42"><circle cx="25.8" cy="16" r="12.8" stroke="#4478be" stroke-width="3" fill="#fff"/><path d="M16.5 25 L4 37.5" stroke="#4478be" stroke-width="4.2" stroke-linecap="round"/></svg><div style="position:absolute;top:160.19px;font-size:17.5px;line-height:17.5px;color:#262626;font-weight:normal;white-space:pre;left:1298px;width:600px;text-align:center;transform:scaleX(1.06);transform-origin:center top;">Find &amp;</div><div style="position:absolute;top:183.89px;font-size:17.5px;line-height:17.5px;color:#262626;font-weight:normal;white-space:pre;left:1289.3px;width:600px;text-align:center;transform:scaleX(0.93);transform-origin:center top;">Select</div><svg style="position:absolute;left:1618px;top:188px;" width="9" height="6" viewBox="0 0 9 6"><path d="M1 1 L4.5 5 L8 1" stroke="#262626" stroke-width="1.7" fill="none"/></svg><svg style="position:absolute;left:1682px;top:118px;" width="17" height="17" viewBox="0 0 17 17"><circle cx="8.5" cy="8.5" r="7.5" fill="#ff8c00" style="filter:blur(0.6px)"/></svg><div style="position:absolute;top:160.19px;font-size:17.5px;line-height:17.5px;color:#262626;font-weight:normal;white-space:pre;left:1392px;width:600px;text-align:center;transform:scaleX(1.035);transform-origin:center top;">Add-ins</div><div style="position:absolute;left:0px;top:234px;width:1919px;height:65px;background:#e6e6e6;"></div><div style="position:absolute;left:7px;top:249px;width:152px;height:35px;background:#fff;border:1px solid #c6c6c6;box-sizing:border-box;"></div><div style="position:absolute;top:258.76px;font-size:18px;line-height:18px;color:#262626;font-weight:normal;white-space:pre;left:14px;">A1</div><svg style="position:absolute;left:140px;top:263px;" width="9" height="5" viewBox="0 0 9 5"><path d="M0.5 0.5 H8.5 L4.5 4.5Z" fill="#666"/></svg><div style="position:absolute;left:179px;top:258px;width:3px;height:3px;background:#a8a8a8;"></div><div style="position:absolute;left:179px;top:264px;width:3px;height:3px;background:#a8a8a8;"></div><div style="position:absolute;left:179px;top:270px;width:3px;height:3px;background:#a8a8a8;"></div><div style="position:absolute;left:204px;top:249px;width:164px;height:35px;background:#fff;border:1px solid #c6c6c6;box-sizing:border-box;"></div><svg style="position:absolute;left:222px;top:258px;" width="19" height="17" viewBox="0 0 19 17"><path d="M2 1.5 L17 15.5 M17 1.5 L2 15.5" stroke="#b4b4b4" stroke-width="2.2"/></svg><svg style="position:absolute;left:276px;top:258px;" width="21" height="18" viewBox="0 0 21 18"><path d="M1.5 10 L7 15.5 L19.5 1.5" stroke="#c8c8c8" stroke-width="3" fill="none"/></svg><div style="position:absolute;top:256.22px;font-size:21px;line-height:21px;color:#555;font-weight:normal;white-space:pre;left:330px;font-family:'Liberation Serif',serif;font-style:italic;font-weight:bold;">f</div><div style="position:absolute;top:261.30px;font-size:15px;line-height:15px;color:#555;font-weight:normal;white-space:pre;left:338px;font-family:'Liberation Serif',serif;font-style:italic;font-weight:bold;">x</div><div style="position:absolute;left:372px;top:249px;width:1541px;height:35px;background:#fff;border:1px solid #c6c6c6;box-sizing:border-box;"></div><div style="position:absolute;top:257.66px;font-size:19.3px;line-height:19.3px;color:#262626;font-weight:normal;white-space:pre;left:390px;transform:scaleX(1.05);transform-origin:left top;">Report Date: 2026-03-23</div><svg style="position:absolute;left:1893px;top:263px;" width="13" height="10" viewBox="0 0 13 10"><path d="M0.9 1 H2.7 L6.4 5 L10.4 1 H12 V3.6 L6.4 9.1 L0.9 3.6 Z" fill="#777"/></svg><div style="position:absolute;left:0px;top:299px;width:1919px;height:637px;background:#fff;"></div><div style="position:absolute;left:0px;top:299px;width:1889px;height:28px;background:#e6e6e6;"></div><div style="position:absolute;left:0px;top:327px;width:39px;height:609px;background:#e6e6e6;"></div><div style="position:absolute;left:39px;top:299px;width:346px;height:28px;background:#d2d2d2;"></div><div style="position:absolute;left:0px;top:327px;width:39px;height:31px;background:#d2d2d2;"></div><svg style="position:absolute;left:14px;top:302px;" width="23" height="23" viewBox="0 0 23 23"><path d="M22 1 V22 H1 Z" fill="#b4b4b4"/></svg><div style="position:absolute;left:212px;top:327px;width:1px;height:609px;background:#d4d4d4;"></div><div style="position:absolute;left:385px;top:327px;width:1px;height:609px;background:#d4d4d4;"></div><div style="position:absolute;left:558px;top:327px;width:1px;height:609px;background:#d4d4d4;"></div><div style="position:absolute;left:731px;top:327px;width:1px;height:609px;background:#d4d4d4;"></div><div style="position:absolute;left:904px;top:327px;width:1px;height:609px;background:#d4d4d4;"></div><div style="position:absolute;left:1077px;top:327px;width:1px;height:609px;background:#d4d4d4;"></div><div style="position:absolute;left:1250px;top:327px;width:1px;height:609px;background:#d4d4d4;"></div><div style="position:absolute;left:1423px;top:327px;width:1px;height:609px;background:#d4d4d4;"></div><div style="position:absolute;left:1596px;top:327px;width:1px;height:609px;background:#d4d4d4;"></div><div style="position:absolute;left:1769px;top:327px;width:1px;height:609px;background:#d4d4d4;"></div><div style="position:absolute;left:39px;top:358px;width:1850px;height:1px;background:#d4d4d4;"></div><div style="position:absolute;left:39px;top:389px;width:1850px;height:1px;background:#d4d4d4;"></div><div style="position:absolute;left:39px;top:418px;width:1850px;height:1px;background:#d4d4d4;"></div><div style="position:absolute;left:39px;top:447px;width:1850px;height:1px;background:#d4d4d4;"></div><div style="position:absolute;left:39px;top:476px;width:1850px;height:1px;background:#d4d4d4;"></div><div style="position:absolute;left:39px;top:505px;width:1850px;height:1px;background:#d4d4d4;"></div><div style="position:absolute;left:39px;top:534px;width:1850px;height:1px;background:#d4d4d4;"></div><div style="position:absolute;left:39px;top:563px;width:1850px;height:1px;background:#d4d4d4;"></div><div style="position:absolute;left:39px;top:592px;width:1850px;height:1px;background:#d4d4d4;"></div><div style="position:absolute;left:39px;top:621px;width:1850px;height:1px;background:#d4d4d4;"></div><div style="position:absolute;left:39px;top:650px;width:1850px;height:1px;background:#d4d4d4;"></div><div style="position:absolute;left:39px;top:679px;width:1850px;height:1px;background:#d4d4d4;"></div><div style="position:absolute;left:39px;top:708px;width:1850px;height:1px;background:#d4d4d4;"></div><div style="position:absolute;left:39px;top:737px;width:1850px;height:1px;background:#d4d4d4;"></div><div style="position:absolute;left:39px;top:766px;width:1850px;height:1px;background:#d4d4d4;"></div><div style="position:absolute;left:39px;top:795px;width:1850px;height:1px;background:#d4d4d4;"></div><div style="position:absolute;left:39px;top:824px;width:1850px;height:1px;background:#d4d4d4;"></div><div style="position:absolute;left:39px;top:853px;width:1850px;height:1px;background:#d4d4d4;"></div><div style="position:absolute;left:39px;top:882px;width:1850px;height:1px;background:#d4d4d4;"></div><div style="position:absolute;left:39px;top:911px;width:1850px;height:1px;background:#d4d4d4;"></div><div style="position:absolute;left:212px;top:299px;width:1px;height:28px;background:#ababab;"></div><div style="position:absolute;left:385px;top:299px;width:1px;height:28px;background:#ababab;"></div><div style="position:absolute;left:558px;top:299px;width:1px;height:28px;background:#ababab;"></div><div style="position:absolute;left:731px;top:299px;width:1px;height:28px;background:#ababab;"></div><div style="position:absolute;left:904px;top:299px;width:1px;height:28px;background:#ababab;"></div><div style="position:absolute;left:1077px;top:299px;width:1px;height:28px;background:#ababab;"></div><div style="position:absolute;left:1250px;top:299px;width:1px;height:28px;background:#ababab;"></div><div style="position:absolute;left:1423px;top:299px;width:1px;height:28px;background:#ababab;"></div><div style="position:absolute;left:1596px;top:299px;width:1px;height:28px;background:#ababab;"></div><div style="position:absolute;left:1769px;top:299px;width:1px;height:28px;background:#ababab;"></div><div style="position:absolute;left:39px;top:299px;width:1px;height:28px;background:#ababab;"></div><div style="position:absolute;left:0px;top:326px;width:1889px;height:1px;background:#ebebeb;"></div><div style="position:absolute;left:0px;top:327px;width:1889px;height:1px;background:#a0a0a0;"></div><div style="position:absolute;left:39px;top:327px;width:1px;height:609px;background:#ababab;"></div><div style="position:absolute;left:0px;top:358px;width:39px;height:1px;background:#bdbdbd;"></div><div style="position:absolute;left:0px;top:389px;width:39px;height:1px;background:#bdbdbd;"></div><div style="position:absolute;left:0px;top:418px;width:39px;height:1px;background:#bdbdbd;"></div><div style="position:absolute;left:0px;top:447px;width:39px;height:1px;background:#bdbdbd;"></div><div style="position:absolute;left:0px;top:476px;width:39px;height:1px;background:#bdbdbd;"></div><div style="position:absolute;left:0px;top:505px;width:39px;height:1px;background:#bdbdbd;"></div><div style="position:absolute;left:0px;top:534px;width:39px;height:1px;background:#bdbdbd;"></div><div style="position:absolute;left:0px;top:563px;width:39px;height:1px;background:#bdbdbd;"></div><div style="position:absolute;left:0px;top:592px;width:39px;height:1px;background:#bdbdbd;"></div><div style="position:absolute;left:0px;top:621px;width:39px;height:1px;background:#bdbdbd;"></div><div style="position:absolute;left:0px;top:650px;width:39px;height:1px;background:#bdbdbd;"></div><div style="position:absolute;left:0px;top:679px;width:39px;height:1px;background:#bdbdbd;"></div><div style="position:absolute;left:0px;top:708px;width:39px;height:1px;background:#bdbdbd;"></div><div style="position:absolute;left:0px;top:737px;width:39px;height:1px;background:#bdbdbd;"></div><div style="position:absolute;left:0px;top:766px;width:39px;height:1px;background:#bdbdbd;"></div><div style="position:absolute;left:0px;top:795px;width:39px;height:1px;background:#bdbdbd;"></div><div style="position:absolute;left:0px;top:824px;width:39px;height:1px;background:#bdbdbd;"></div><div style="position:absolute;left:0px;top:853px;width:39px;height:1px;background:#bdbdbd;"></div><div style="position:absolute;left:0px;top:882px;width:39px;height:1px;background:#bdbdbd;"></div><div style="position:absolute;left:0px;top:911px;width:39px;height:1px;background:#bdbdbd;"></div><div style="position:absolute;top:305.72px;font-size:19px;line-height:19px;color:#217346;font-weight:normal;white-space:pre;left:-174.5px;width:600px;text-align:center;">A</div><div style="position:absolute;top:305.72px;font-size:19px;line-height:19px;color:#217346;font-weight:normal;white-space:pre;left:-1.5px;width:600px;text-align:center;">B</div><div style="position:absolute;top:305.72px;font-size:19px;line-height:19px;color:#333;font-weight:normal;white-space:pre;left:171.5px;width:600px;text-align:center;">C</div><div style="position:absolute;top:305.72px;font-size:19px;line-height:19px;color:#333;font-weight:normal;white-space:pre;left:344.5px;width:600px;text-align:center;">D</div><div style="position:absolute;top:305.72px;font-size:19px;line-height:19px;color:#333;font-weight:normal;white-space:pre;left:517.5px;width:600px;text-align:center;">E</div><div style="position:absolute;top:305.72px;font-size:19px;line-height:19px;color:#333;font-weight:normal;white-space:pre;left:690.5px;width:600px;text-align:center;">F</div><div style="position:absolute;top:305.72px;font-size:19px;line-height:19px;color:#333;font-weight:normal;white-space:pre;left:863.5px;width:600px;text-align:center;">G</div><div style="position:absolute;top:305.72px;font-size:19px;line-height:19px;color:#333;font-weight:normal;white-space:pre;left:1036.5px;width:600px;text-align:center;">H</div><div style="position:absolute;top:305.72px;font-size:19px;line-height:19px;color:#333;font-weight:normal;white-space:pre;left:1209.5px;width:600px;text-align:center;">I</div><div style="position:absolute;top:305.72px;font-size:19px;line-height:19px;color:#333;font-weight:normal;white-space:pre;left:1382.5px;width:600px;text-align:center;">J</div><div style="position:absolute;top:335.42px;font-size:19px;line-height:19px;color:#217346;font-weight:normal;white-space:pre;left:-280.5px;width:600px;text-align:center;">1</div><div style="position:absolute;top:366.42px;font-size:19px;line-height:19px;color:#262626;font-weight:normal;white-space:pre;left:-280.5px;width:600px;text-align:center;">2</div><div style="position:absolute;top:395.92px;font-size:19px;line-height:19px;color:#262626;font-weight:normal;white-space:pre;left:-280.5px;width:600px;text-align:center;">3</div><div style="position:absolute;top:424.92px;font-size:19px;line-height:19px;color:#262626;font-weight:normal;white-space:pre;left:-280.5px;width:600px;text-align:center;">4</div><div style="position:absolute;top:453.92px;font-size:19px;line-height:19px;color:#262626;font-weight:normal;white-space:pre;left:-280.5px;width:600px;text-align:center;">5</div><div style="position:absolute;top:482.92px;font-size:19px;line-height:19px;color:#262626;font-weight:normal;white-space:pre;left:-280.5px;width:600px;text-align:center;">6</div><div style="position:absolute;top:511.92px;font-size:19px;line-height:19px;color:#262626;font-weight:normal;white-space:pre;left:-280.5px;width:600px;text-align:center;">7</div><div style="position:absolute;top:540.92px;font-size:19px;line-height:19px;color:#262626;font-weight:normal;white-space:pre;left:-280.5px;width:600px;text-align:center;">8</div><div style="position:absolute;top:569.92px;font-size:19px;line-height:19px;color:#262626;font-weight:normal;white-space:pre;left:-280.5px;width:600px;text-align:center;">9</div><div style="position:absolute;top:598.92px;font-size:19px;line-height:19px;color:#262626;font-weight:normal;white-space:pre;left:-280.5px;width:600px;text-align:center;">10</div><div style="position:absolute;top:627.92px;font-size:19px;line-height:19px;color:#262626;font-weight:normal;white-space:pre;left:-280.5px;width:600px;text-align:center;">11</div><div style="position:absolute;top:656.92px;font-size:19px;line-height:19px;color:#262626;font-weight:normal;white-space:pre;left:-280.5px;width:600px;text-align:center;">12</div><div style="position:absolute;top:685.92px;font-size:19px;line-height:19px;color:#262626;font-weight:normal;white-space:pre;left:-280.5px;width:600px;text-align:center;">13</div><div style="position:absolute;top:714.92px;font-size:19px;line-height:19px;color:#262626;font-weight:normal;white-space:pre;left:-280.5px;width:600px;text-align:center;">14</div><div style="position:absolute;top:743.92px;font-size:19px;line-height:19px;color:#262626;font-weight:normal;white-space:pre;left:-280.5px;width:600px;text-align:center;">15</div><div style="position:absolute;top:772.92px;font-size:19px;line-height:19px;color:#262626;font-weight:normal;white-space:pre;left:-280.5px;width:600px;text-align:center;">16</div><div style="position:absolute;top:801.92px;font-size:19px;line-height:19px;color:#262626;font-weight:normal;white-space:pre;left:-280.5px;width:600px;text-align:center;">17</div><div style="position:absolute;top:830.92px;font-size:19px;line-height:19px;color:#262626;font-weight:normal;white-space:pre;left:-280.5px;width:600px;text-align:center;">18</div><div style="position:absolute;top:859.92px;font-size:19px;line-height:19px;color:#262626;font-weight:normal;white-space:pre;left:-280.5px;width:600px;text-align:center;">19</div><div style="position:absolute;top:888.92px;font-size:19px;line-height:19px;color:#262626;font-weight:normal;white-space:pre;left:-280.5px;width:600px;text-align:center;">20</div><div style="position:absolute;top:917.92px;font-size:19px;line-height:19px;color:#262626;font-weight:normal;white-space:pre;left:-280.5px;width:600px;text-align:center;">21</div><div style="position:absolute;left:40px;top:448px;width:1849px;height:28px;background:#87ceeb;"></div><div style="position:absolute;left:40px;top:477px;width:1849px;height:28px;background:#e6d0ee;"></div><div style="position:absolute;left:40px;top:535px;width:1849px;height:28px;background:#e6d0ee;"></div><div style="position:absolute;left:40px;top:593px;width:1849px;height:28px;background:#e6d0ee;"></div><div style="position:absolute;left:40px;top:651px;width:1849px;height:28px;background:#e6d0ee;"></div><div style="position:absolute;left:40px;top:709px;width:1849px;height:28px;background:#e6d0ee;"></div><div style="position:absolute;left:39px;top:447px;width:1850px;height:1px;background:#000;"></div><div style="position:absolute;left:39px;top:476px;width:1850px;height:1px;background:#000;"></div><div style="position:absolute;left:39px;top:505px;width:1850px;height:1px;background:#000;"></div><div style="position:absolute;left:39px;top:534px;width:1850px;height:1px;background:#000;"></div><div style="position:absolute;left:39px;top:563px;width:1850px;height:1px;background:#000;"></div><div style="position:absolute;left:39px;top:592px;width:1850px;height:1px;background:#000;"></div><div style="position:absolute;left:39px;top:621px;width:1850px;height:1px;background:#000;"></div><div style="position:absolute;left:39px;top:650px;width:1850px;height:1px;background:#000;"></div><div style="position:absolute;left:39px;top:679px;width:1850px;height:1px;background:#000;"></div><div style="position:absolute;left:39px;top:708px;width:1850px;height:1px;background:#000;"></div><div style="position:absolute;left:39px;top:737px;width:1850px;height:1px;background:#000;"></div><div style="position:absolute;left:39px;top:766px;width:1850px;height:1px;background:#000;"></div><div style="position:absolute;left:212px;top:447px;width:1px;height:320px;background:#000;"></div><div style="position:absolute;left:385px;top:447px;width:1px;height:320px;background:#000;"></div><div style="position:absolute;left:558px;top:447px;width:1px;height:320px;background:#000;"></div><div style="position:absolute;left:731px;top:447px;width:1px;height:320px;background:#000;"></div><div style="position:absolute;left:904px;top:447px;width:1px;height:320px;background:#000;"></div><div style="position:absolute;left:1077px;top:447px;width:1px;height:320px;background:#000;"></div><div style="position:absolute;left:1250px;top:447px;width:1px;height:320px;background:#000;"></div><div style="position:absolute;left:1423px;top:447px;width:1px;height:320px;background:#000;"></div><div style="position:absolute;left:1596px;top:447px;width:1px;height:320px;background:#000;"></div><div style="position:absolute;left:1769px;top:447px;width:1px;height:320px;background:#000;"></div><div style="position:absolute;left:40px;top:448px;width:172px;height:28px;overflow:hidden;"><div style="position:absolute;left:-300px;width:772px;top:7.69px;line-height:17.5px;font-size:17.5px;text-align:center;white-space:pre;font-weight:bold;color:#000;transform:scaleX(1.03);transform-origin:center top;">id</div></div><div style="position:absolute;left:213px;top:448px;width:172px;height:28px;overflow:hidden;"><div style="position:absolute;left:-300px;width:772px;top:7.69px;line-height:17.5px;font-size:17.5px;text-align:center;white-space:pre;font-weight:bold;color:#000;transform:scaleX(1.03);transform-origin:center top;">company_id</div></div><div style="position:absolute;left:386px;top:448px;width:172px;height:28px;overflow:hidden;"><div style="position:absolute;left:-300px;width:772px;top:7.69px;line-height:17.5px;font-size:17.5px;text-align:center;white-space:pre;font-weight:bold;color:#000;transform:scaleX(1.03);transform-origin:center top;">create_date</div></div><div style="position:absolute;left:559px;top:448px;width:172px;height:28px;overflow:hidden;"><div style="position:absolute;left:-300px;width:772px;top:7.69px;line-height:17.5px;font-size:17.5px;text-align:center;white-space:pre;font-weight:bold;color:#000;transform:scaleX(1.03);transform-origin:center top;">name</div></div><div style="position:absolute;left:732px;top:448px;width:172px;height:28px;overflow:hidden;"><div style="position:absolute;left:-300px;width:772px;top:7.69px;line-height:17.5px;font-size:17.5px;text-align:center;white-space:pre;font-weight:bold;color:#000;transform:scaleX(1.03);transform-origin:center top;">parent_id</div></div><div style="position:absolute;left:905px;top:448px;width:172px;height:28px;overflow:hidden;"><div style="position:absolute;left:-300px;width:772px;top:7.69px;line-height:17.5px;font-size:17.5px;text-align:center;white-space:pre;font-weight:bold;color:#000;transform:scaleX(1.03);transform-origin:center top;">user_id</div></div><div style="position:absolute;left:1078px;top:448px;width:172px;height:28px;overflow:hidden;"><div style="position:absolute;left:-300px;width:772px;top:7.69px;line-height:17.5px;font-size:17.5px;text-align:center;white-space:pre;font-weight:bold;color:#000;transform:scaleX(1.03);transform-origin:center top;">state_id</div></div><div style="position:absolute;left:1251px;top:448px;width:172px;height:28px;overflow:hidden;"><div style="position:absolute;left:-300px;width:772px;top:7.69px;line-height:17.5px;font-size:17.5px;text-align:center;white-space:pre;font-weight:bold;color:#000;transform:scaleX(1.03);transform-origin:center top;">country_id</div></div><div style="position:absolute;left:1424px;top:448px;width:172px;height:28px;overflow:hidden;"><div style="position:absolute;left:-300px;width:772px;top:7.69px;line-height:17.5px;font-size:17.5px;text-align:center;white-space:pre;font-weight:bold;color:#000;transform:scaleX(1.03);transform-origin:center top;">industry_id</div></div><div style="position:absolute;left:1597px;top:448px;width:172px;height:28px;overflow:hidden;"><div style="position:absolute;left:-300px;width:772px;top:7.69px;line-height:17.5px;font-size:17.5px;text-align:center;white-space:pre;font-weight:bold;color:#000;transform:scaleX(1.03);transform-origin:center top;">color</div></div><div style="position:absolute;left:40px;top:477px;width:172px;height:28px;overflow:hidden;"><div style="position:absolute;left:-300px;width:772px;top:6.76px;line-height:18px;font-size:18px;text-align:center;white-space:pre;font-weight:normal;color:#000;transform:scaleX(1.025);transform-origin:center top;">4</div></div><div style="position:absolute;left:213px;top:477px;width:172px;height:28px;overflow:hidden;"><div style="position:absolute;left:-300px;width:772px;top:6.76px;line-height:18px;font-size:18px;text-align:center;white-space:pre;font-weight:normal;color:#000;transform:scaleX(1.025);transform-origin:center top;">None</div></div><div style="position:absolute;left:386px;top:477px;width:172px;height:28px;overflow:hidden;"><div style="position:absolute;left:1px;top:6.76px;line-height:18px;font-size:18px;white-space:pre;transform:scaleX(0.99);transform-origin:left top;">6-03-21 05:49:46.510</div></div><div style="position:absolute;left:559px;top:477px;width:172px;height:28px;overflow:hidden;"><div style="position:absolute;left:-300px;width:772px;top:6.76px;line-height:18px;font-size:18px;text-align:center;white-space:pre;font-weight:normal;color:#000;transform:scaleX(1.025);transform-origin:center top;">Public user</div></div><div style="position:absolute;left:732px;top:477px;width:172px;height:28px;overflow:hidden;"><div style="position:absolute;left:-300px;width:772px;top:6.76px;line-height:18px;font-size:18px;text-align:center;white-space:pre;font-weight:normal;color:#000;transform:scaleX(1.025);transform-origin:center top;">None</div></div><div style="position:absolute;left:905px;top:477px;width:172px;height:28px;overflow:hidden;"><div style="position:absolute;left:-300px;width:772px;top:6.76px;line-height:18px;font-size:18px;text-align:center;white-space:pre;font-weight:normal;color:#000;transform:scaleX(1.025);transform-origin:center top;">None</div></div><div style="position:absolute;left:1078px;top:477px;width:172px;height:28px;overflow:hidden;"><div style="position:absolute;left:-300px;width:772px;top:6.76px;line-height:18px;font-size:18px;text-align:center;white-space:pre;font-weight:normal;color:#000;transform:scaleX(1.025);transform-origin:center top;">None</div></div><div style="position:absolute;left:1251px;top:477px;width:172px;height:28px;overflow:hidden;"><div style="position:absolute;left:-300px;width:772px;top:6.76px;line-height:18px;font-size:18px;text-align:center;white-space:pre;font-weight:normal;color:#000;transform:scaleX(1.025);transform-origin:center top;">None</div></div><div style="position:absolute;left:1424px;top:477px;width:172px;height:28px;overflow:hidden;"><div style="position:absolute;left:-300px;width:772px;top:6.76px;line-height:18px;font-size:18px;text-align:center;white-space:pre;font-weight:normal;color:#000;transform:scaleX(1.025);transform-origin:center top;">None</div></div><div style="position:absolute;left:1597px;top:477px;width:172px;height:28px;overflow:hidden;"><div style="position:absolute;left:-300px;width:772px;top:6.76px;line-height:18px;font-size:18px;text-align:center;white-space:pre;font-weight:normal;color:#000;transform:scaleX(1.025);transform-origin:center top;">0</div></div><div style="position:absolute;left:40px;top:506px;width:172px;height:28px;overflow:hidden;"><div style="position:absolute;left:-300px;width:772px;top:6.76px;line-height:18px;font-size:18px;text-align:center;white-space:pre;font-weight:normal;color:#000;transform:scaleX(1.025);transform-origin:center top;">5</div></div><div style="position:absolute;left:213px;top:506px;width:172px;height:28px;overflow:hidden;"><div style="position:absolute;left:-300px;width:772px;top:6.76px;line-height:18px;font-size:18px;text-align:center;white-space:pre;font-weight:normal;color:#000;transform:scaleX(1.025);transform-origin:center top;">None</div></div><div style="position:absolute;left:386px;top:506px;width:172px;height:28px;overflow:hidden;"><div style="position:absolute;left:1px;top:6.76px;line-height:18px;font-size:18px;white-space:pre;transform:scaleX(0.99);transform-origin:left top;">6-03-21 05:49:46.510</div></div><div style="position:absolute;left:559px;top:506px;width:172px;height:28px;overflow:hidden;"><div style="position:absolute;left:-300px;width:772px;top:6.76px;line-height:18px;font-size:18px;text-align:center;white-space:pre;font-weight:normal;color:#000;transform:scaleX(1.025);transform-origin:center top;">Portal User Template</div></div><div style="position:absolute;left:732px;top:506px;width:172px;height:28px;overflow:hidden;"><div style="position:absolute;left:-300px;width:772px;top:6.76px;line-height:18px;font-size:18px;text-align:center;white-space:pre;font-weight:normal;color:#000;transform:scaleX(1.025);transform-origin:center top;">None</div></div><div style="position:absolute;left:905px;top:506px;width:172px;height:28px;overflow:hidden;"><div style="position:absolute;left:-300px;width:772px;top:6.76px;line-height:18px;font-size:18px;text-align:center;white-space:pre;font-weight:normal;color:#000;transform:scaleX(1.025);transform-origin:center top;">None</div></div><div style="position:absolute;left:1078px;top:506px;width:172px;height:28px;overflow:hidden;"><div style="position:absolute;left:-300px;width:772px;top:6.76px;line-height:18px;font-size:18px;text-align:center;white-space:pre;font-weight:normal;color:#000;transform:scaleX(1.025);transform-origin:center top;">None</div></div><div style="position:absolute;left:1251px;top:506px;width:172px;height:28px;overflow:hidden;"><div style="position:absolute;left:-300px;width:772px;top:6.76px;line-height:18px;font-size:18px;text-align:center;white-space:pre;font-weight:normal;color:#000;transform:scaleX(1.025);transform-origin:center top;">None</div></div><div style="position:absolute;left:1424px;top:506px;width:172px;height:28px;overflow:hidden;"><div style="position:absolute;left:-300px;width:772px;top:6.76px;line-height:18px;font-size:18px;text-align:center;white-space:pre;font-weight:normal;color:#000;transform:scaleX(1.025);transform-origin:center top;">None</div></div><div style="position:absolute;left:1597px;top:506px;width:172px;height:28px;overflow:hidden;"><div style="position:absolute;left:-300px;width:772px;top:6.76px;line-height:18px;font-size:18px;text-align:center;white-space:pre;font-weight:normal;color:#000;transform:scaleX(1.025);transform-origin:center top;">0</div></div><div style="position:absolute;left:40px;top:535px;width:172px;height:28px;overflow:hidden;"><div style="position:absolute;left:-300px;width:772px;top:6.76px;line-height:18px;font-size:18px;text-align:center;white-space:pre;font-weight:normal;color:#000;transform:scaleX(1.025);transform-origin:center top;">1</div></div><div style="position:absolute;left:213px;top:535px;width:172px;height:28px;overflow:hidden;"><div style="position:absolute;left:-300px;width:772px;top:6.76px;line-height:18px;font-size:18px;text-align:center;white-space:pre;font-weight:normal;color:#000;transform:scaleX(1.025);transform-origin:center top;">None</div></div><div style="position:absolute;left:386px;top:535px;width:172px;height:28px;overflow:hidden;"><div style="position:absolute;left:1px;top:6.76px;line-height:18px;font-size:18px;white-space:pre;transform:scaleX(0.99);transform-origin:left top;">6-03-21 05:49:46.510</div></div><div style="position:absolute;left:559px;top:535px;width:172px;height:28px;overflow:hidden;"><div style="position:absolute;left:-300px;width:772px;top:6.76px;line-height:18px;font-size:18px;text-align:center;white-space:pre;font-weight:normal;color:#000;transform:scaleX(1.025);transform-origin:center top;">YourCompany</div></div><div style="position:absolute;left:732px;top:535px;width:172px;height:28px;overflow:hidden;"><div style="position:absolute;left:-300px;width:772px;top:6.76px;line-height:18px;font-size:18px;text-align:center;white-space:pre;font-weight:normal;color:#000;transform:scaleX(1.025);transform-origin:center top;">None</div></div><div style="position:absolute;left:905px;top:535px;width:172px;height:28px;overflow:hidden;"><div style="position:absolute;left:-300px;width:772px;top:6.76px;line-height:18px;font-size:18px;text-align:center;white-space:pre;font-weight:normal;color:#000;transform:scaleX(1.025);transform-origin:center top;">None</div></div><div style="position:absolute;left:1078px;top:535px;width:172px;height:28px;overflow:hidden;"><div style="position:absolute;left:-300px;width:772px;top:6.76px;line-height:18px;font-size:18px;text-align:center;white-space:pre;font-weight:normal;color:#000;transform:scaleX(1.025);transform-origin:center top;">13</div></div><div style="position:absolute;left:1251px;top:535px;width:172px;height:28px;overflow:hidden;"><div style="position:absolute;left:-300px;width:772px;top:6.76px;line-height:18px;font-size:18px;text-align:center;white-space:pre;font-weight:normal;color:#000;transform:scaleX(1.025);transform-origin:center top;">233</div></div><div style="position:absolute;left:1424px;top:535px;width:172px;height:28px;overflow:hidden;"><div style="position:absolute;left:-300px;width:772px;top:6.76px;line-height:18px;font-size:18px;text-align:center;white-space:pre;font-weight:normal;color:#000;transform:scaleX(1.025);transform-origin:center top;">None</div></div><div style="position:absolute;left:1597px;top:535px;width:172px;height:28px;overflow:hidden;"><div style="position:absolute;left:-300px;width:772px;top:6.76px;line-height:18px;font-size:18px;text-align:center;white-space:pre;font-weight:normal;color:#000;transform:scaleX(1.025);transform-origin:center top;">0</div></div><div style="position:absolute;left:40px;top:564px;width:172px;height:28px;overflow:hidden;"><div style="position:absolute;left:-300px;width:772px;top:6.76px;line-height:18px;font-size:18px;text-align:center;white-space:pre;font-weight:normal;color:#000;transform:scaleX(1.025);transform-origin:center top;">6</div></div><div style="position:absolute;left:213px;top:564px;width:172px;height:28px;overflow:hidden;"><div style="position:absolute;left:-300px;width:772px;top:6.76px;line-height:18px;font-size:18px;text-align:center;white-space:pre;font-weight:normal;color:#000;transform:scaleX(1.025);transform-origin:center top;">1</div></div><div style="position:absolute;left:386px;top:564px;width:172px;height:28px;overflow:hidden;"><div style="position:absolute;left:1px;top:6.76px;line-height:18px;font-size:18px;white-space:pre;transform:scaleX(0.99);transform-origin:left top;">6-03-21 05:49:46.510</div></div><div style="position:absolute;left:559px;top:564px;width:172px;height:28px;overflow:hidden;"><div style="position:absolute;left:-300px;width:772px;top:6.76px;line-height:18px;font-size:18px;text-align:center;white-space:pre;font-weight:normal;color:#000;transform:scaleX(1.025);transform-origin:center top;">Marc Demo</div></div><div style="position:absolute;left:732px;top:564px;width:172px;height:28px;overflow:hidden;"><div style="position:absolute;left:-300px;width:772px;top:6.76px;line-height:18px;font-size:18px;text-align:center;white-space:pre;font-weight:normal;color:#000;transform:scaleX(1.025);transform-origin:center top;">None</div></div><div style="position:absolute;left:905px;top:564px;width:172px;height:28px;overflow:hidden;"><div style="position:absolute;left:-300px;width:772px;top:6.76px;line-height:18px;font-size:18px;text-align:center;white-space:pre;font-weight:normal;color:#000;transform:scaleX(1.025);transform-origin:center top;">5</div></div><div style="position:absolute;left:1078px;top:564px;width:172px;height:28px;overflow:hidden;"><div style="position:absolute;left:-300px;width:772px;top:6.76px;line-height:18px;font-size:18px;text-align:center;white-space:pre;font-weight:normal;color:#000;transform:scaleX(1.025);transform-origin:center top;">40</div></div><div style="position:absolute;left:1251px;top:564px;width:172px;height:28px;overflow:hidden;"><div style="position:absolute;left:-300px;width:772px;top:6.76px;line-height:18px;font-size:18px;text-align:center;white-space:pre;font-weight:normal;color:#000;transform:scaleX(1.025);transform-origin:center top;">233</div></div><div style="position:absolute;left:1424px;top:564px;width:172px;height:28px;overflow:hidden;"><div style="position:absolute;left:-300px;width:772px;top:6.76px;line-height:18px;font-size:18px;text-align:center;white-space:pre;font-weight:normal;color:#000;transform:scaleX(1.025);transform-origin:center top;">None</div></div><div style="position:absolute;left:1597px;top:564px;width:172px;height:28px;overflow:hidden;"><div style="position:absolute;left:-300px;width:772px;top:6.76px;line-height:18px;font-size:18px;text-align:center;white-space:pre;font-weight:normal;color:#000;transform:scaleX(1.025);transform-origin:center top;">0</div></div><div style="position:absolute;left:40px;top:593px;width:172px;height:28px;overflow:hidden;"><div style="position:absolute;left:-300px;width:772px;top:6.76px;line-height:18px;font-size:18px;text-align:center;white-space:pre;font-weight:normal;color:#000;transform:scaleX(1.025);transform-origin:center top;">32</div></div><div style="position:absolute;left:213px;top:593px;width:172px;height:28px;overflow:hidden;"><div style="position:absolute;left:-300px;width:772px;top:6.76px;line-height:18px;font-size:18px;text-align:center;white-space:pre;font-weight:normal;color:#000;transform:scaleX(1.025);transform-origin:center top;">None</div></div><div style="position:absolute;left:386px;top:593px;width:172px;height:28px;overflow:hidden;"><div style="position:absolute;left:1px;top:6.76px;line-height:18px;font-size:18px;white-space:pre;transform:scaleX(0.99);transform-origin:left top;">6-03-21 05:49:46.510</div></div><div style="position:absolute;left:559px;top:593px;width:172px;height:28px;overflow:hidden;"><div style="position:absolute;left:-300px;width:772px;top:6.76px;line-height:18px;font-size:18px;text-align:center;white-space:pre;font-weight:normal;color:#000;transform:scaleX(1.025);transform-origin:center top;">Oscar Morgan</div></div><div style="position:absolute;left:732px;top:593px;width:172px;height:28px;overflow:hidden;"><div style="position:absolute;left:-300px;width:772px;top:6.76px;line-height:18px;font-size:18px;text-align:center;white-space:pre;font-weight:normal;color:#000;transform:scaleX(1.025);transform-origin:center top;">10</div></div><div style="position:absolute;left:905px;top:593px;width:172px;height:28px;overflow:hidden;"><div style="position:absolute;left:-300px;width:772px;top:6.76px;line-height:18px;font-size:18px;text-align:center;white-space:pre;font-weight:normal;color:#000;transform:scaleX(1.025);transform-origin:center top;">None</div></div><div style="position:absolute;left:1078px;top:593px;width:172px;height:28px;overflow:hidden;"><div style="position:absolute;left:-300px;width:772px;top:6.76px;line-height:18px;font-size:18px;text-align:center;white-space:pre;font-weight:normal;color:#000;transform:scaleX(1.025);transform-origin:center top;">None</div></div><div style="position:absolute;left:1251px;top:593px;width:172px;height:28px;overflow:hidden;"><div style="position:absolute;left:-300px;width:772px;top:6.76px;line-height:18px;font-size:18px;text-align:center;white-space:pre;font-weight:normal;color:#000;transform:scaleX(1.025);transform-origin:center top;">203</div></div><div style="position:absolute;left:1424px;top:593px;width:172px;height:28px;overflow:hidden;"><div style="position:absolute;left:-300px;width:772px;top:6.76px;line-height:18px;font-size:18px;text-align:center;white-space:pre;font-weight:normal;color:#000;transform:scaleX(1.025);transform-origin:center top;">None</div></div><div style="position:absolute;left:1597px;top:593px;width:172px;height:28px;overflow:hidden;"><div style="position:absolute;left:-300px;width:772px;top:6.76px;line-height:18px;font-size:18px;text-align:center;white-space:pre;font-weight:normal;color:#000;transform:scaleX(1.025);transform-origin:center top;">0</div></div><div style="position:absolute;left:40px;top:622px;width:172px;height:28px;overflow:hidden;"><div style="position:absolute;left:-300px;width:772px;top:6.76px;line-height:18px;font-size:18px;text-align:center;white-space:pre;font-weight:normal;color:#000;transform:scaleX(1.025);transform-origin:center top;">40</div></div><div style="position:absolute;left:213px;top:622px;width:172px;height:28px;overflow:hidden;"><div style="position:absolute;left:-300px;width:772px;top:6.76px;line-height:18px;font-size:18px;text-align:center;white-space:pre;font-weight:normal;color:#000;transform:scaleX(1.025);transform-origin:center top;">None</div></div><div style="position:absolute;left:386px;top:622px;width:172px;height:28px;overflow:hidden;"><div style="position:absolute;left:1px;top:6.76px;line-height:18px;font-size:18px;white-space:pre;transform:scaleX(0.99);transform-origin:left top;">6-03-21 05:49:46.510</div></div><div style="position:absolute;left:559px;top:622px;width:172px;height:28px;overflow:hidden;"><div style="position:absolute;left:-300px;width:772px;top:6.76px;line-height:18px;font-size:18px;text-align:center;white-space:pre;font-weight:normal;color:#000;transform:scaleX(1.025);transform-origin:center top;">Chester Reed</div></div><div style="position:absolute;left:732px;top:622px;width:172px;height:28px;overflow:hidden;"><div style="position:absolute;left:-300px;width:772px;top:6.76px;line-height:18px;font-size:18px;text-align:center;white-space:pre;font-weight:normal;color:#000;transform:scaleX(1.025);transform-origin:center top;">1</div></div><div style="position:absolute;left:905px;top:622px;width:172px;height:28px;overflow:hidden;"><div style="position:absolute;left:-300px;width:772px;top:6.76px;line-height:18px;font-size:18px;text-align:center;white-space:pre;font-weight:normal;color:#000;transform:scaleX(1.025);transform-origin:center top;">None</div></div><div style="position:absolute;left:1078px;top:622px;width:172px;height:28px;overflow:hidden;"><div style="position:absolute;left:-300px;width:772px;top:6.76px;line-height:18px;font-size:18px;text-align:center;white-space:pre;font-weight:normal;color:#000;transform:scaleX(1.025);transform-origin:center top;">13</div></div><div style="position:absolute;left:1251px;top:622px;width:172px;height:28px;overflow:hidden;"><div style="position:absolute;left:-300px;width:772px;top:6.76px;line-height:18px;font-size:18px;text-align:center;white-space:pre;font-weight:normal;color:#000;transform:scaleX(1.025);transform-origin:center top;">233</div></div><div style="position:absolute;left:1424px;top:622px;width:172px;height:28px;overflow:hidden;"><div style="position:absolute;left:-300px;width:772px;top:6.76px;line-height:18px;font-size:18px;text-align:center;white-space:pre;font-weight:normal;color:#000;transform:scaleX(1.025);transform-origin:center top;">None</div></div><div style="position:absolute;left:1597px;top:622px;width:172px;height:28px;overflow:hidden;"><div style="position:absolute;left:-300px;width:772px;top:6.76px;line-height:18px;font-size:18px;text-align:center;white-space:pre;font-weight:normal;color:#000;transform:scaleX(1.025);transform-origin:center top;">0</div></div><div style="position:absolute;left:40px;top:651px;width:172px;height:28px;overflow:hidden;"><div style="position:absolute;left:-300px;width:772px;top:6.76px;line-height:18px;font-size:18px;text-align:center;white-space:pre;font-weight:normal;color:#000;transform:scaleX(1.025);transform-origin:center top;">41</div></div><div style="position:absolute;left:213px;top:651px;width:172px;height:28px;overflow:hidden;"><div style="position:absolute;left:-300px;width:772px;top:6.76px;line-height:18px;font-size:18px;text-align:center;white-space:pre;font-weight:normal;color:#000;transform:scaleX(1.025);transform-origin:center top;">None</div></div><div style="position:absolute;left:386px;top:651px;width:172px;height:28px;overflow:hidden;"><div style="position:absolute;left:1px;top:6.76px;line-height:18px;font-size:18px;white-space:pre;transform:scaleX(0.99);transform-origin:left top;">6-03-21 05:49:46.510</div></div><div style="position:absolute;left:559px;top:651px;width:172px;height:28px;overflow:hidden;"><div style="position:absolute;left:-300px;width:772px;top:6.76px;line-height:18px;font-size:18px;text-align:center;white-space:pre;font-weight:normal;color:#000;transform:scaleX(1.025);transform-origin:center top;">Dwayne Newman</div></div><div style="position:absolute;left:732px;top:651px;width:172px;height:28px;overflow:hidden;"><div style="position:absolute;left:-300px;width:772px;top:6.76px;line-height:18px;font-size:18px;text-align:center;white-space:pre;font-weight:normal;color:#000;transform:scaleX(1.025);transform-origin:center top;">1</div></div><div style="position:absolute;left:905px;top:651px;width:172px;height:28px;overflow:hidden;"><div style="position:absolute;left:-300px;width:772px;top:6.76px;line-height:18px;font-size:18px;text-align:center;white-space:pre;font-weight:normal;color:#000;transform:scaleX(1.025);transform-origin:center top;">None</div></div><div style="position:absolute;left:1078px;top:651px;width:172px;height:28px;overflow:hidden;"><div style="position:absolute;left:-300px;width:772px;top:6.76px;line-height:18px;font-size:18px;text-align:center;white-space:pre;font-weight:normal;color:#000;transform:scaleX(1.025);transform-origin:center top;">13</div></div><div style="position:absolute;left:1251px;top:651px;width:172px;height:28px;overflow:hidden;"><div style="position:absolute;left:-300px;width:772px;top:6.76px;line-height:18px;font-size:18px;text-align:center;white-space:pre;font-weight:normal;color:#000;transform:scaleX(1.025);transform-origin:center top;">233</div></div><div style="position:absolute;left:1424px;top:651px;width:172px;height:28px;overflow:hidden;"><div style="position:absolute;left:-300px;width:772px;top:6.76px;line-height:18px;font-size:18px;text-align:center;white-space:pre;font-weight:normal;color:#000;transform:scaleX(1.025);transform-origin:center top;">None</div></div><div style="position:absolute;left:1597px;top:651px;width:172px;height:28px;overflow:hidden;"><div style="position:absolute;left:-300px;width:772px;top:6.76px;line-height:18px;font-size:18px;text-align:center;white-space:pre;font-weight:normal;color:#000;transform:scaleX(1.025);transform-origin:center top;">0</div></div><div style="position:absolute;left:40px;top:680px;width:172px;height:28px;overflow:hidden;"><div style="position:absolute;left:-300px;width:772px;top:6.76px;line-height:18px;font-size:18px;text-align:center;white-space:pre;font-weight:normal;color:#000;transform:scaleX(1.025);transform-origin:center top;">17</div></div><div style="position:absolute;left:213px;top:680px;width:172px;height:28px;overflow:hidden;"><div style="position:absolute;left:-300px;width:772px;top:6.76px;line-height:18px;font-size:18px;text-align:center;white-space:pre;font-weight:normal;color:#000;transform:scaleX(1.025);transform-origin:center top;">None</div></div><div style="position:absolute;left:386px;top:680px;width:172px;height:28px;overflow:hidden;"><div style="position:absolute;left:1px;top:6.76px;line-height:18px;font-size:18px;white-space:pre;transform:scaleX(0.99);transform-origin:left top;">6-03-21 05:49:46.510</div></div><div style="position:absolute;left:559px;top:680px;width:172px;height:28px;overflow:hidden;"><div style="position:absolute;left:-300px;width:772px;top:6.76px;line-height:18px;font-size:18px;text-align:center;white-space:pre;font-weight:normal;color:#000;transform:scaleX(1.025);transform-origin:center top;">Willie Burke</div></div><div style="position:absolute;left:732px;top:680px;width:172px;height:28px;overflow:hidden;"><div style="position:absolute;left:-300px;width:772px;top:6.76px;line-height:18px;font-size:18px;text-align:center;white-space:pre;font-weight:normal;color:#000;transform:scaleX(1.025);transform-origin:center top;">8</div></div><div style="position:absolute;left:905px;top:680px;width:172px;height:28px;overflow:hidden;"><div style="position:absolute;left:-300px;width:772px;top:6.76px;line-height:18px;font-size:18px;text-align:center;white-space:pre;font-weight:normal;color:#000;transform:scaleX(1.025);transform-origin:center top;">None</div></div><div style="position:absolute;left:1078px;top:680px;width:172px;height:28px;overflow:hidden;"><div style="position:absolute;left:-300px;width:772px;top:6.76px;line-height:18px;font-size:18px;text-align:center;white-space:pre;font-weight:normal;color:#000;transform:scaleX(1.025);transform-origin:center top;">13</div></div><div style="position:absolute;left:1251px;top:680px;width:172px;height:28px;overflow:hidden;"><div style="position:absolute;left:-300px;width:772px;top:6.76px;line-height:18px;font-size:18px;text-align:center;white-space:pre;font-weight:normal;color:#000;transform:scaleX(1.025);transform-origin:center top;">233</div></div><div style="position:absolute;left:1424px;top:680px;width:172px;height:28px;overflow:hidden;"><div style="position:absolute;left:-300px;width:772px;top:6.76px;line-height:18px;font-size:18px;text-align:center;white-space:pre;font-weight:normal;color:#000;transform:scaleX(1.025);transform-origin:center top;">None</div></div><div style="position:absolute;left:1597px;top:680px;width:172px;height:28px;overflow:hidden;"><div style="position:absolute;left:-300px;width:772px;top:6.76px;line-height:18px;font-size:18px;text-align:center;white-space:pre;font-weight:normal;color:#000;transform:scaleX(1.025);transform-origin:center top;">0</div></div><div style="position:absolute;left:40px;top:709px;width:172px;height:28px;overflow:hidden;"><div style="position:absolute;left:-300px;width:772px;top:6.76px;line-height:18px;font-size:18px;text-align:center;white-space:pre;font-weight:normal;color:#000;transform:scaleX(1.025);transform-origin:center top;">34</div></div><div style="position:absolute;left:213px;top:709px;width:172px;height:28px;overflow:hidden;"><div style="position:absolute;left:-300px;width:772px;top:6.76px;line-height:18px;font-size:18px;text-align:center;white-space:pre;font-weight:normal;color:#000;transform:scaleX(1.025);transform-origin:center top;">None</div></div><div style="position:absolute;left:386px;top:709px;width:172px;height:28px;overflow:hidden;"><div style="position:absolute;left:1px;top:6.76px;line-height:18px;font-size:18px;white-space:pre;transform:scaleX(0.99);transform-origin:left top;">6-03-21 05:49:46.510</div></div><div style="position:absolute;left:559px;top:709px;width:172px;height:28px;overflow:hidden;"><div style="position:absolute;left:-300px;width:772px;top:6.76px;line-height:18px;font-size:18px;text-align:center;white-space:pre;font-weight:normal;color:#000;transform:scaleX(1.025);transform-origin:center top;">Colleen Diaz</div></div><div style="position:absolute;left:732px;top:709px;width:172px;height:28px;overflow:hidden;"><div style="position:absolute;left:-300px;width:772px;top:6.76px;line-height:18px;font-size:18px;text-align:center;white-space:pre;font-weight:normal;color:#000;transform:scaleX(1.025);transform-origin:center top;">15</div></div><div style="position:absolute;left:905px;top:709px;width:172px;height:28px;overflow:hidden;"><div style="position:absolute;left:-300px;width:772px;top:6.76px;line-height:18px;font-size:18px;text-align:center;white-space:pre;font-weight:normal;color:#000;transform:scaleX(1.025);transform-origin:center top;">None</div></div><div style="position:absolute;left:1078px;top:709px;width:172px;height:28px;overflow:hidden;"><div style="position:absolute;left:-300px;width:772px;top:6.76px;line-height:18px;font-size:18px;text-align:center;white-space:pre;font-weight:normal;color:#000;transform:scaleX(1.025);transform-origin:center top;">13</div></div><div style="position:absolute;left:1251px;top:709px;width:172px;height:28px;overflow:hidden;"><div style="position:absolute;left:-300px;width:772px;top:6.76px;line-height:18px;font-size:18px;text-align:center;white-space:pre;font-weight:normal;color:#000;transform:scaleX(1.025);transform-origin:center top;">233</div></div><div style="position:absolute;left:1424px;top:709px;width:172px;height:28px;overflow:hidden;"><div style="position:absolute;left:-300px;width:772px;top:6.76px;line-height:18px;font-size:18px;text-align:center;white-space:pre;font-weight:normal;color:#000;transform:scaleX(1.025);transform-origin:center top;">None</div></div><div style="position:absolute;left:1597px;top:709px;width:172px;height:28px;overflow:hidden;"><div style="position:absolute;left:-300px;width:772px;top:6.76px;line-height:18px;font-size:18px;text-align:center;white-space:pre;font-weight:normal;color:#000;transform:scaleX(1.025);transform-origin:center top;">0</div></div><div style="position:absolute;left:40px;top:738px;width:172px;height:28px;overflow:hidden;"><div style="position:absolute;left:-300px;width:772px;top:6.76px;line-height:18px;font-size:18px;text-align:center;white-space:pre;font-weight:normal;color:#000;transform:scaleX(1.025);transform-origin:center top;">35</div></div><div style="position:absolute;left:213px;top:738px;width:172px;height:28px;overflow:hidden;"><div style="position:absolute;left:-300px;width:772px;top:6.76px;line-height:18px;font-size:18px;text-align:center;white-space:pre;font-weight:normal;color:#000;transform:scaleX(1.025);transform-origin:center top;">None</div></div><div style="position:absolute;left:386px;top:738px;width:172px;height:28px;overflow:hidden;"><div style="position:absolute;left:1px;top:6.76px;line-height:18px;font-size:18px;white-space:pre;transform:scaleX(0.99);transform-origin:left top;">6-03-21 05:49:46.510</div></div><div style="position:absolute;left:559px;top:738px;width:172px;height:28px;overflow:hidden;"><div style="position:absolute;left:-300px;width:772px;top:6.76px;line-height:18px;font-size:18px;text-align:center;white-space:pre;font-weight:normal;color:#000;transform:scaleX(1.025);transform-origin:center top;">Lorraine Douglas</div></div><div style="position:absolute;left:732px;top:738px;width:172px;height:28px;overflow:hidden;"><div style="position:absolute;left:-300px;width:772px;top:6.76px;line-height:18px;font-size:18px;text-align:center;white-space:pre;font-weight:normal;color:#000;transform:scaleX(1.025);transform-origin:center top;">16</div></div><div style="position:absolute;left:905px;top:738px;width:172px;height:28px;overflow:hidden;"><div style="position:absolute;left:-300px;width:772px;top:6.76px;line-height:18px;font-size:18px;text-align:center;white-space:pre;font-weight:normal;color:#000;transform:scaleX(1.025);transform-origin:center top;">None</div></div><div style="position:absolute;left:1078px;top:738px;width:172px;height:28px;overflow:hidden;"><div style="position:absolute;left:-300px;width:772px;top:6.76px;line-height:18px;font-size:18px;text-align:center;white-space:pre;font-weight:normal;color:#000;transform:scaleX(1.025);transform-origin:center top;">13</div></div><div style="position:absolute;left:1251px;top:738px;width:172px;height:28px;overflow:hidden;"><div style="position:absolute;left:-300px;width:772px;top:6.76px;line-height:18px;font-size:18px;text-align:center;white-space:pre;font-weight:normal;color:#000;transform:scaleX(1.025);transform-origin:center top;">233</div></div><div style="position:absolute;left:1424px;top:738px;width:172px;height:28px;overflow:hidden;"><div style="position:absolute;left:-300px;width:772px;top:6.76px;line-height:18px;font-size:18px;text-align:center;white-space:pre;font-weight:normal;color:#000;transform:scaleX(1.025);transform-origin:center top;">None</div></div><div style="position:absolute;left:1597px;top:738px;width:172px;height:28px;overflow:hidden;"><div style="position:absolute;left:-300px;width:772px;top:6.76px;line-height:18px;font-size:18px;text-align:center;white-space:pre;font-weight:normal;color:#000;transform:scaleX(1.025);transform-origin:center top;">0</div></div><div style="position:absolute;left:1770px;top:449px;width:119px;height:28px;overflow:hidden;"><div style="position:absolute;left:44px;top:7.69px;line-height:17.5px;font-size:17.5px;font-weight:bold;white-space:pre;">commercial_partner_id</div></div><svg style="position:absolute;left:40px;top:477px;" width="9" height="9" viewBox="0 0 9 9"><path d="M0 0 H9 L0 9 Z" fill="#008000"/></svg><svg style="position:absolute;left:40px;top:506px;" width="9" height="9" viewBox="0 0 9 9"><path d="M0 0 H9 L0 9 Z" fill="#008000"/></svg><svg style="position:absolute;left:40px;top:535px;" width="9" height="9" viewBox="0 0 9 9"><path d="M0 0 H9 L0 9 Z" fill="#008000"/></svg><svg style="position:absolute;left:40px;top:564px;" width="9" height="9" viewBox="0 0 9 9"><path d="M0 0 H9 L0 9 Z" fill="#008000"/></svg><svg style="position:absolute;left:40px;top:593px;" width="9" height="9" viewBox="0 0 9 9"><path d="M0 0 H9 L0 9 Z" fill="#008000"/></svg><svg style="position:absolute;left:40px;top:622px;" width="9" height="9" viewBox="0 0 9 9"><path d="M0 0 H9 L0 9 Z" fill="#008000"/></svg><svg style="position:absolute;left:40px;top:651px;" width="9" height="9" viewBox="0 0 9 9"><path d="M0 0 H9 L0 9 Z" fill="#008000"/></svg><svg style="position:absolute;left:40px;top:680px;" width="9" height="9" viewBox="0 0 9 9"><path d="M0 0 H9 L0 9 Z" fill="#008000"/></svg><svg style="position:absolute;left:40px;top:709px;" width="9" height="9" viewBox="0 0 9 9"><path d="M0 0 H9 L0 9 Z" fill="#008000"/></svg><svg style="position:absolute;left:40px;top:738px;" width="9" height="9" viewBox="0 0 9 9"><path d="M0 0 H9 L0 9 Z" fill="#008000"/></svg><svg style="position:absolute;left:213px;top:564px;" width="9" height="9" viewBox="0 0 9 9"><path d="M0 0 H9 L0 9 Z" fill="#008000"/></svg><svg style="position:absolute;left:732px;top:593px;" width="9" height="9" viewBox="0 0 9 9"><path d="M0 0 H9 L0 9 Z" fill="#008000"/></svg><svg style="position:absolute;left:732px;top:622px;" width="9" height="9" viewBox="0 0 9 9"><path d="M0 0 H9 L0 9 Z" fill="#008000"/></svg><svg style="position:absolute;left:732px;top:651px;" width="9" height="9" viewBox="0 0 9 9"><path d="M0 0 H9 L0 9 Z" fill="#008000"/></svg><svg style="position:absolute;left:732px;top:680px;" width="9" height="9" viewBox="0 0 9 9"><path d="M0 0 H9 L0 9 Z" fill="#008000"/></svg><svg style="position:absolute;left:732px;top:709px;" width="9" height="9" viewBox="0 0 9 9"><path d="M0 0 H9 L0 9 Z" fill="#008000"/></svg><svg style="position:absolute;left:732px;top:738px;" width="9" height="9" viewBox="0 0 9 9"><path d="M0 0 H9 L0 9 Z" fill="#008000"/></svg><svg style="position:absolute;left:905px;top:564px;" width="9" height="9" viewBox="0 0 9 9"><path d="M0 0 H9 L0 9 Z" fill="#008000"/></svg><svg style="position:absolute;left:1078px;top:535px;" width="9" height="9" viewBox="0 0 9 9"><path d="M0 0 H9 L0 9 Z" fill="#008000"/></svg><svg style="position:absolute;left:1078px;top:564px;" width="9" height="9" viewBox="0 0 9 9"><path d="M0 0 H9 L0 9 Z" fill="#008000"/></svg><svg style="position:absolute;left:1078px;top:622px;" width="9" height="9" viewBox="0 0 9 9"><path d="M0 0 H9 L0 9 Z" fill="#008000"/></svg><svg style="position:absolute;left:1078px;top:651px;" width="9" height="9" viewBox="0 0 9 9"><path d="M0 0 H9 L0 9 Z" fill="#008000"/></svg><svg style="position:absolute;left:1078px;top:680px;" width="9" height="9" viewBox="0 0 9 9"><path d="M0 0 H9 L0 9 Z" fill="#008000"/></svg><svg style="position:absolute;left:1078px;top:709px;" width="9" height="9" viewBox="0 0 9 9"><path d="M0 0 H9 L0 9 Z" fill="#008000"/></svg><svg style="position:absolute;left:1078px;top:738px;" width="9" height="9" viewBox="0 0 9 9"><path d="M0 0 H9 L0 9 Z" fill="#008000"/></svg><svg style="position:absolute;left:1251px;top:535px;" width="9" height="9" viewBox="0 0 9 9"><path d="M0 0 H9 L0 9 Z" fill="#008000"/></svg><svg style="position:absolute;left:1251px;top:564px;" width="9" height="9" viewBox="0 0 9 9"><path d="M0 0 H9 L0 9 Z" fill="#008000"/></svg><svg style="position:absolute;left:1251px;top:593px;" width="9" height="9" viewBox="0 0 9 9"><path d="M0 0 H9 L0 9 Z" fill="#008000"/></svg><svg style="position:absolute;left:1251px;top:622px;" width="9" height="9" viewBox="0 0 9 9"><path d="M0 0 H9 L0 9 Z" fill="#008000"/></svg><svg style="position:absolute;left:1251px;top:651px;" width="9" height="9" viewBox="0 0 9 9"><path d="M0 0 H9 L0 9 Z" fill="#008000"/></svg><svg style="position:absolute;left:1251px;top:680px;" width="9" height="9" viewBox="0 0 9 9"><path d="M0 0 H9 L0 9 Z" fill="#008000"/></svg><svg style="position:absolute;left:1251px;top:709px;" width="9" height="9" viewBox="0 0 9 9"><path d="M0 0 H9 L0 9 Z" fill="#008000"/></svg><svg style="position:absolute;left:1251px;top:738px;" width="9" height="9" viewBox="0 0 9 9"><path d="M0 0 H9 L0 9 Z" fill="#008000"/></svg><svg style="position:absolute;left:1597px;top:477px;" width="9" height="9" viewBox="0 0 9 9"><path d="M0 0 H9 L0 9 Z" fill="#008000"/></svg><svg style="position:absolute;left:1597px;top:506px;" width="9" height="9" viewBox="0 0 9 9"><path d="M0 0 H9 L0 9 Z" fill="#008000"/></svg><svg style="position:absolute;left:1597px;top:535px;" width="9" height="9" viewBox="0 0 9 9"><path d="M0 0 H9 L0 9 Z" fill="#008000"/></svg><svg style="position:absolute;left:1597px;top:564px;" width="9" height="9" viewBox="0 0 9 9"><path d="M0 0 H9 L0 9 Z" fill="#008000"/></svg><svg style="position:absolute;left:1597px;top:593px;" width="9" height="9" viewBox="0 0 9 9"><path d="M0 0 H9 L0 9 Z" fill="#008000"/></svg><svg style="position:absolute;left:1597px;top:622px;" width="9" height="9" viewBox="0 0 9 9"><path d="M0 0 H9 L0 9 Z" fill="#008000"/></svg><svg style="position:absolute;left:1597px;top:651px;" width="9" height="9" viewBox="0 0 9 9"><path d="M0 0 H9 L0 9 Z" fill="#008000"/></svg><svg style="position:absolute;left:1597px;top:680px;" width="9" height="9" viewBox="0 0 9 9"><path d="M0 0 H9 L0 9 Z" fill="#008000"/></svg><svg style="position:absolute;left:1597px;top:709px;" width="9" height="9" viewBox="0 0 9 9"><path d="M0 0 H9 L0 9 Z" fill="#008000"/></svg><svg style="position:absolute;left:1597px;top:738px;" width="9" height="9" viewBox="0 0 9 9"><path d="M0 0 H9 L0 9 Z" fill="#008000"/></svg><svg style="position:absolute;left:1770px;top:477px;" width="9" height="9" viewBox="0 0 9 9"><path d="M0 0 H9 L0 9 Z" fill="#008000"/></svg><svg style="position:absolute;left:1770px;top:506px;" width="9" height="9" viewBox="0 0 9 9"><path d="M0 0 H9 L0 9 Z" fill="#008000"/></svg><svg style="position:absolute;left:1770px;top:535px;" width="9" height="9" viewBox="0 0 9 9"><path d="M0 0 H9 L0 9 Z" fill="#008000"/></svg><svg style="position:absolute;left:1770px;top:564px;" width="9" height="9" viewBox="0 0 9 9"><path d="M0 0 H9 L0 9 Z" fill="#008000"/></svg><svg style="position:absolute;left:1770px;top:593px;" width="9" height="9" viewBox="0 0 9 9"><path d="M0 0 H9 L0 9 Z" fill="#008000"/></svg><svg style="position:absolute;left:1770px;top:622px;" width="9" height="9" viewBox="0 0 9 9"><path d="M0 0 H9 L0 9 Z" fill="#008000"/></svg><svg style="position:absolute;left:1770px;top:651px;" width="9" height="9" viewBox="0 0 9 9"><path d="M0 0 H9 L0 9 Z" fill="#008000"/></svg><svg style="position:absolute;left:1770px;top:680px;" width="9" height="9" viewBox="0 0 9 9"><path d="M0 0 H9 L0 9 Z" fill="#008000"/></svg><svg style="position:absolute;left:1770px;top:709px;" width="9" height="9" viewBox="0 0 9 9"><path d="M0 0 H9 L0 9 Z" fill="#008000"/></svg><svg style="position:absolute;left:1770px;top:738px;" width="9" height="9" viewBox="0 0 9 9"><path d="M0 0 H9 L0 9 Z" fill="#008000"/></svg><div style="position:absolute;left:40px;top:334.02px;width:345px;text-align:center;font-size:21px;line-height:21px;font-weight:bold;white-space:pre;">Report Date: 2026-03-23</div><div style="position:absolute;top:365.57px;font-size:20px;line-height:20px;color:#000;font-weight:bold;white-space:pre;left:55px;transform:scaleX(1.05);transform-origin:left top;">YourCompany</div><div style="position:absolute;left:38px;top:326px;width:349px;height:2px;background:#217346;"></div><div style="position:absolute;left:38px;top:326px;width:2px;height:34px;background:#217346;"></div><div style="position:absolute;left:385px;top:326px;width:2px;height:30px;background:#217346;"></div><div style="position:absolute;left:38px;top:357px;width:344px;height:2px;background:#217346;"></div><div style="position:absolute;left:382px;top:355px;width:6px;height:6px;background:#217346;border:1px solid #fff;box-sizing:content-box;margin:-1px;"></div><div style="position:absolute;left:1889px;top:299px;width:30px;height:639px;background:#e6e6e6;"></div><div style="position:absolute;left:1892px;top:325px;width:25px;height:613px;background:#f0f0f0;"></div><div style="position:absolute;left:1889px;top:327px;width:1px;height:610px;background:#a0a0a0;"></div><div style="position:absolute;left:1892px;top:300px;width:25px;height:25px;background:#fff;border:1px solid #ababab;box-sizing:border-box;"></div><svg style="position:absolute;left:1898px;top:308px;" width="13" height="8" viewBox="0 0 13 8"><path d="M0.5 7.5 L6.5 0.5 L12.5 7.5Z" fill="#222"/></svg><div style="position:absolute;left:1892px;top:325px;width:25px;height:558px;background:#fff;border:1px solid #ababab;box-sizing:border-box;"></div><div style="position:absolute;left:1892px;top:913px;width:25px;height:25px;background:#fff;border:1px solid #ababab;box-sizing:border-box;"></div><svg style="position:absolute;left:1898px;top:922px;" width="13" height="8" viewBox="0 0 13 8"><path d="M0.5 0.5 L6.5 7.5 L12.5 0.5Z" fill="#222"/></svg><div style="position:absolute;left:0px;top:938px;width:1919px;height:37px;background:#e6e6e6;"></div><div style="position:absolute;left:0px;top:936px;width:1890px;height:1px;background:#a0a0a0;"></div><div style="position:absolute;left:0px;top:937px;width:1890px;height:1px;background:#e6e6e6;"></div><div style="position:absolute;left:1333px;top:943px;width:534px;height:25px;background:#f0f0f0;"></div><svg style="position:absolute;left:30px;top:950px;" width="10" height="12" viewBox="0 0 10 12"><path d="M9 0.5 V11.5 L1 6Z" fill="#bdbdbd"/></svg><svg style="position:absolute;left:70px;top:950px;" width="10" height="12" viewBox="0 0 10 12"><path d="M1 0.5 V11.5 L9 6Z" fill="#bdbdbd"/></svg><div style="position:absolute;left:133px;top:936px;width:89px;height:34px;background:#fff;border-left:1px solid #a0a0a0;border-right:1px solid #a0a0a0;box-sizing:border-box;"></div><div style="position:absolute;left:133px;top:970px;width:89px;height:2px;background:#217346;"></div><div style="position:absolute;top:946.27px;font-size:20px;line-height:20px;color:#217346;font-weight:bold;white-space:pre;left:145.5px;transform:scaleX(0.95);transform-origin:left top;">Sheet1</div><svg style="position:absolute;left:268px;top:944px;" width="24" height="24" viewBox="0 0 24 24"><circle cx="12" cy="12" r="10.8" stroke="#777" stroke-width="1.4" fill="none"/><path d="M12 6.5 V17.5 M6.5 12 H17.5" stroke="#666" stroke-width="1.6"/></svg><div style="position:absolute;left:1150px;top:947px;width:3px;height:3px;background:#a5a5a5;"></div><div style="position:absolute;left:1150px;top:954px;width:3px;height:3px;background:#a5a5a5;"></div><div style="position:absolute;left:1150px;top:960px;width:3px;height:3px;background:#a5a5a5;"></div><div style="position:absolute;left:1173px;top:943px;width:25px;height:25px;background:#fff;border:1px solid #8c8c8c;box-sizing:border-box;"></div><svg style="position:absolute;left:1181px;top:949px;" width="8" height="13" viewBox="0 0 8 13"><path d="M7.5 0.5 V12.5 L0.5 6.5Z" fill="#222"/></svg><div style="position:absolute;left:1197px;top:943px;width:137px;height:25px;background:#fff;border:1px solid #8c8c8c;box-sizing:border-box;"></div><div style="position:absolute;left:1866px;top:943px;width:25px;height:25px;background:#fff;border:1px solid #8c8c8c;box-sizing:border-box;"></div><svg style="position:absolute;left:1876px;top:949px;" width="8" height="13" viewBox="0 0 8 13"><path d="M0.5 0.5 V12.5 L7.5 6.5Z" fill="#222"/></svg><div style="position:absolute;left:0px;top:975px;width:1919px;height:1px;background:#d4d4d4;"></div><div style="position:absolute;left:0px;top:976px;width:1919px;height:32px;background:#f3f3f3;"></div><div style="position:absolute;top:983.53px;font-size:16.5px;line-height:16.5px;color:#444;font-weight:normal;white-space:pre;left:16.5px;transform:scaleX(0.875);transform-origin:left top;">Ready</div><svg style="position:absolute;left:85px;top:978px;" width="30" height="28" viewBox="0 0 30 28"><path d="M11.3 5.6 A8.6 8.6 0 0 0 12.6 22.4" stroke="#444" stroke-width="1.6" fill="none" stroke-dasharray="7.8 2.2"/><path d="M13.6 4 V12" stroke="#444" stroke-width="1.6"/><path d="M10.5 12 H16.7 L13.6 15.2Z" fill="#444"/><path d="M17.5 12.6 H21.5" stroke="#444" stroke-width="1.5"/><path d="M21.3 9.2 L24.3 12.6 L21.3 16Z" fill="#444"/><path d="M14.3 19.7 L17.8 24.6 L25.4 15.3" stroke="#444" stroke-width="2.6" fill="none"/></svg><div style="position:absolute;top:983.53px;font-size:16.5px;line-height:16.5px;color:#444;font-weight:normal;white-space:pre;left:116px;transform:scaleX(0.93);transform-origin:left top;">Accessibility: Good to go</div><div style="position:absolute;left:1474px;top:976px;width:60px;height:32px;background:#c6c6c6;"></div><svg style="position:absolute;left:1494px;top:982px;" width="20" height="19" viewBox="0 0 20 19"><g stroke="#6a6a6a" stroke-width="1" fill="none" shape-rendering="crispEdges"><rect x="0.5" y="0.5" width="18" height="18"/><path d="M6.5 0.5 V18.5 M12.5 0.5 V18.5 M0.5 6.5 H18.5 M0.5 12.5 H18.5"/></g></svg><svg style="position:absolute;left:1554px;top:982px;" width="20" height="19" viewBox="0 0 20 19"><g stroke="#6a6a6a" stroke-width="1" fill="none" shape-rendering="crispEdges"><rect x="0.5" y="0.5" width="18" height="18"/><rect x="4.5" y="3.5" width="10" height="12"/><path d="M7 6.5 H12 M7 9.5 H12 M7 12.5 H12"/></g></svg><svg style="position:absolute;left:1614px;top:982px;" width="20" height="19" viewBox="0 0 20 19"><g stroke="#6a6a6a" stroke-width="1" fill="none" shape-rendering="crispEdges"><rect x="0.5" y="0.5" width="18" height="17"/><path d="M6.5 0.5 V10.5 M12.5 0.5 V10.5 M0.5 10.5 H12.5"/></g></svg><div style="position:absolute;left:1662px;top:991px;width:11px;height:1px;background:#444;"></div><div style="position:absolute;left:1682px;top:991px;width:149px;height:2px;background:#444;"></div><div style="position:absolute;left:1753px;top:984px;width:7px;height:16px;background:#444;"></div><svg style="position:absolute;left:1837px;top:985px;" width="14" height="14" viewBox="0 0 14 14"><path d="M7 1 V13 M1 7 H13" stroke="#555" stroke-width="1.5"/></svg><div style="position:absolute;top:984.33px;font-size:16.5px;line-height:16.5px;color:#444;font-weight:normal;white-space:pre;left:1870px;transform:scaleX(0.935);transform-origin:left top;">100%</div><div style="position:absolute;left:0px;top:1008px;width:1919px;height:2px;background:#c8b5ae;"></div><div style="position:absolute;left:0px;top:1010px;width:1919px;height:4px;background:#f2dfd6;"></div>
</body></html>
